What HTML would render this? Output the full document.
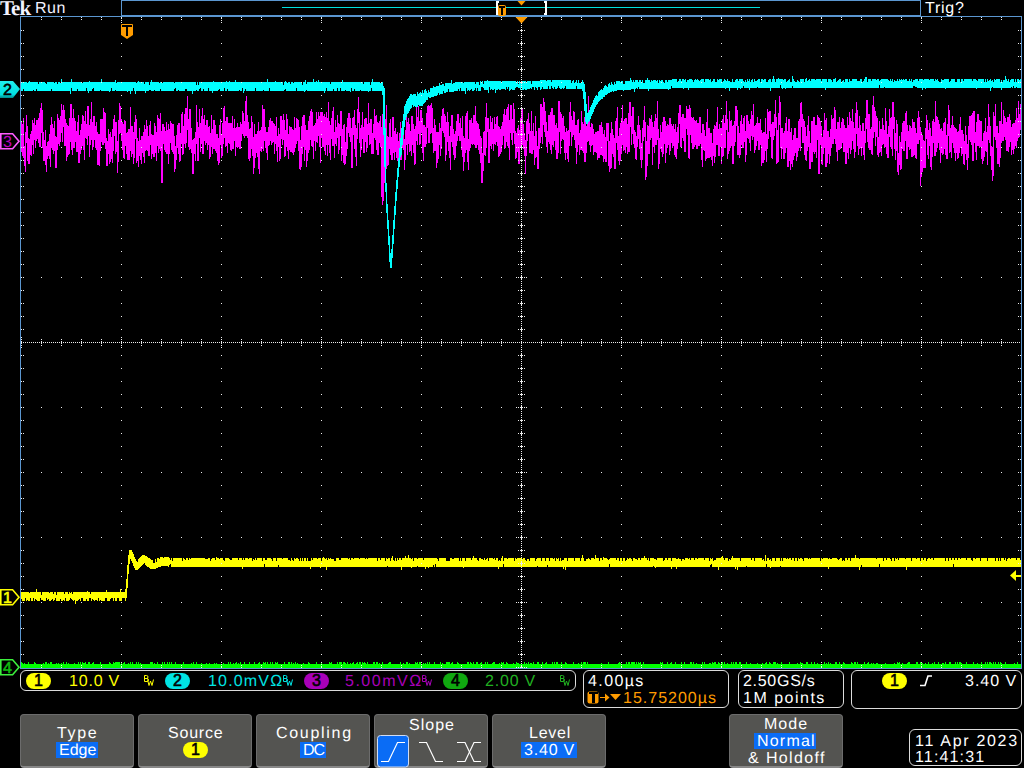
<!DOCTYPE html>
<html><head><meta charset="utf-8">
<style>
html,body{margin:0;padding:0;background:#000;width:1024px;height:768px;overflow:hidden}
body{position:relative;font-family:"Liberation Sans",sans-serif;color:#fff}
.t{position:absolute;white-space:nowrap;font-size:16px;line-height:20px;text-rendering:geometricPrecision}
.box{position:absolute;border:1px solid #dcdcdc;border-radius:6px;box-sizing:border-box}
.btn{position:absolute;top:714px;height:54px;width:114px;background:#545451;border:1px solid #6c6c6c;border-bottom:2px solid #888;border-radius:4px;box-sizing:border-box}
.hl{position:absolute;background:#0a6cf5;height:16px;top:742px}
.pill{position:absolute;height:16px;width:25px;border-radius:8px;font-size:16px;line-height:16px;text-align:center;-webkit-text-stroke:0.6px #000}
</style></head><body>
<svg width="1024" height="768" viewBox="0 0 1024 768" style="position:absolute;left:0;top:0" shape-rendering="crispEdges">
<g fill="#5b96d0">
<rect x="20" y="16" width="1002" height="1"/><rect x="20" y="668" width="1002" height="1"/>
<rect x="20" y="16" width="1" height="653"/><rect x="1021" y="16" width="1" height="653"/>
</g>
<path d="M21 121h1v31h-1zM22 124h1v32h-1zM23 118h1v40h-1zM24 146h1v20h-1zM25 132h1v40h-1zM26 115h1v28h-1zM27 126h1v35h-1zM28 138h1v26h-1zM29 139h1v25h-1zM30 134h1v21h-1zM31 131h1v25h-1zM32 120h1v25h-1zM33 123h1v31h-1zM34 118h1v22h-1zM35 125h1v23h-1zM36 120h1v21h-1zM37 120h1v19h-1zM38 118h1v25h-1zM39 113h1v34h-1zM40 108h1v39h-1zM41 103h1v30h-1zM42 110h1v38h-1zM43 132h1v29h-1zM44 140h1v21h-1zM45 130h1v35h-1zM46 146h1v26h-1zM47 142h1v17h-1zM48 141h1v15h-1zM49 134h1v25h-1zM50 125h1v42h-1zM51 117h1v31h-1zM52 124h1v26h-1zM53 128h1v26h-1zM54 121h1v30h-1zM55 136h1v32h-1zM56 137h1v31h-1zM57 114h1v36h-1zM58 118h1v26h-1zM59 120h1v26h-1zM60 116h1v26h-1zM61 104h1v29h-1zM62 110h1v32h-1zM63 105h1v22h-1zM64 110h1v36h-1zM65 119h1v27h-1zM66 123h1v38h-1zM67 125h1v32h-1zM68 126h1v29h-1zM69 118h1v36h-1zM70 104h1v38h-1zM71 104h1v46h-1zM72 118h1v37h-1zM73 109h1v39h-1zM74 118h1v30h-1zM75 121h1v21h-1zM76 131h1v21h-1zM77 122h1v30h-1zM78 115h1v48h-1zM79 135h1v28h-1zM80 130h1v24h-1zM81 124h1v26h-1zM82 115h1v31h-1zM83 116h1v34h-1zM84 121h1v39h-1zM85 111h1v27h-1zM86 124h1v15h-1zM87 106h1v39h-1zM88 106h1v30h-1zM89 125h1v32h-1zM90 119h1v26h-1zM91 102h1v38h-1zM92 122h1v28h-1zM93 116h1v31h-1zM94 116h1v24h-1zM95 126h1v22h-1zM96 122h1v28h-1zM97 132h1v33h-1zM98 134h1v31h-1zM99 134h1v32h-1zM100 119h1v32h-1zM101 119h1v23h-1zM102 119h1v26h-1zM103 108h1v37h-1zM104 112h1v31h-1zM105 113h1v36h-1zM106 138h1v28h-1zM107 141h1v25h-1zM108 129h1v25h-1zM109 134h1v30h-1zM110 132h1v30h-1zM111 137h1v22h-1zM112 129h1v34h-1zM113 119h1v32h-1zM114 115h1v21h-1zM115 122h1v32h-1zM116 122h1v30h-1zM117 141h1v32h-1zM118 120h1v42h-1zM119 103h1v31h-1zM120 106h1v27h-1zM121 119h1v22h-1zM122 122h1v28h-1zM123 124h1v34h-1zM124 120h1v39h-1zM125 121h1v25h-1zM126 133h1v21h-1zM127 132h1v28h-1zM128 129h1v31h-1zM129 129h1v31h-1zM130 107h1v44h-1zM131 126h1v31h-1zM132 126h1v28h-1zM133 132h1v32h-1zM134 122h1v36h-1zM135 115h1v24h-1zM136 119h1v44h-1zM137 138h1v23h-1zM138 141h1v26h-1zM139 128h1v28h-1zM140 140h1v20h-1zM141 136h1v28h-1zM142 136h1v17h-1zM143 132h1v25h-1zM144 125h1v38h-1zM145 129h1v22h-1zM146 120h1v30h-1zM147 126h1v25h-1zM148 136h1v20h-1zM149 125h1v31h-1zM150 121h1v24h-1zM151 134h1v25h-1zM152 135h1v19h-1zM153 135h1v22h-1zM154 123h1v34h-1zM155 126h1v27h-1zM156 132h1v29h-1zM157 115h1v31h-1zM158 118h1v35h-1zM159 119h1v30h-1zM160 113h1v38h-1zM161 131h1v52h-1zM162 124h1v59h-1zM163 124h1v20h-1zM164 127h1v23h-1zM165 131h1v21h-1zM166 122h1v32h-1zM167 130h1v24h-1zM168 124h1v40h-1zM169 129h1v25h-1zM170 121h1v22h-1zM171 123h1v27h-1zM172 124h1v28h-1zM173 124h1v30h-1zM174 136h1v36h-1zM175 146h1v23h-1zM176 135h1v25h-1zM177 125h1v23h-1zM178 123h1v31h-1zM179 123h1v39h-1zM180 133h1v28h-1zM181 114h1v30h-1zM182 112h1v43h-1zM183 126h1v28h-1zM184 114h1v30h-1zM185 108h1v40h-1zM186 108h1v35h-1zM187 96h1v34h-1zM188 119h1v28h-1zM189 109h1v41h-1zM190 109h1v40h-1zM191 128h1v25h-1zM192 140h1v34h-1zM193 139h1v35h-1zM194 138h1v16h-1zM195 132h1v29h-1zM196 105h1v39h-1zM197 122h1v39h-1zM198 127h1v34h-1zM199 109h1v29h-1zM200 123h1v29h-1zM201 116h1v28h-1zM202 108h1v46h-1zM203 119h1v35h-1zM204 115h1v26h-1zM205 125h1v20h-1zM206 120h1v23h-1zM207 120h1v30h-1zM208 127h1v18h-1zM209 126h1v33h-1zM210 133h1v24h-1zM211 115h1v32h-1zM212 129h1v25h-1zM213 120h1v29h-1zM214 120h1v29h-1zM215 125h1v26h-1zM216 134h1v19h-1zM217 134h1v27h-1zM218 138h1v27h-1zM219 125h1v38h-1zM220 119h1v26h-1zM221 134h1v24h-1zM222 123h1v33h-1zM223 108h1v36h-1zM224 106h1v32h-1zM225 121h1v26h-1zM226 117h1v29h-1zM227 117h1v36h-1zM228 123h1v20h-1zM229 123h1v21h-1zM230 123h1v27h-1zM231 123h1v28h-1zM232 116h1v33h-1zM233 128h1v21h-1zM234 119h1v22h-1zM235 128h1v28h-1zM236 127h1v20h-1zM237 123h1v25h-1zM238 127h1v20h-1zM239 127h1v22h-1zM240 122h1v27h-1zM241 124h1v17h-1zM242 111h1v23h-1zM243 113h1v23h-1zM244 121h1v17h-1zM245 101h1v35h-1zM246 96h1v40h-1zM247 115h1v23h-1zM248 122h1v37h-1zM249 129h1v32h-1zM250 128h1v30h-1zM251 116h1v33h-1zM252 122h1v34h-1zM253 137h1v37h-1zM254 124h1v44h-1zM255 134h1v24h-1zM256 134h1v19h-1zM257 131h1v26h-1zM258 122h1v47h-1zM259 131h1v43h-1zM260 130h1v21h-1zM261 127h1v25h-1zM262 105h1v44h-1zM263 109h1v42h-1zM264 109h1v32h-1zM265 127h1v21h-1zM266 132h1v21h-1zM267 132h1v28h-1zM268 127h1v19h-1zM269 120h1v25h-1zM270 118h1v23h-1zM271 121h1v24h-1zM272 121h1v22h-1zM273 123h1v19h-1zM274 124h1v30h-1zM275 126h1v18h-1zM276 117h1v34h-1zM277 136h1v26h-1zM278 128h1v19h-1zM279 134h1v27h-1zM280 116h1v43h-1zM281 116h1v23h-1zM282 120h1v25h-1zM283 114h1v26h-1zM284 120h1v37h-1zM285 130h1v26h-1zM286 114h1v33h-1zM287 119h1v32h-1zM288 134h1v25h-1zM289 126h1v24h-1zM290 127h1v25h-1zM291 127h1v25h-1zM292 129h1v24h-1zM293 130h1v25h-1zM294 117h1v35h-1zM295 128h1v20h-1zM296 118h1v26h-1zM297 119h1v22h-1zM298 120h1v31h-1zM299 127h1v42h-1zM300 140h1v30h-1zM301 126h1v41h-1zM302 117h1v37h-1zM303 115h1v32h-1zM304 115h1v46h-1zM305 125h1v25h-1zM306 130h1v37h-1zM307 130h1v31h-1zM308 121h1v32h-1zM309 116h1v34h-1zM310 111h1v29h-1zM311 109h1v37h-1zM312 112h1v35h-1zM313 126h1v33h-1zM314 125h1v16h-1zM315 123h1v28h-1zM316 112h1v30h-1zM317 119h1v24h-1zM318 112h1v24h-1zM319 116h1v31h-1zM320 112h1v51h-1zM321 112h1v26h-1zM322 112h1v35h-1zM323 116h1v31h-1zM324 114h1v37h-1zM325 117h1v38h-1zM326 112h1v33h-1zM327 118h1v38h-1zM328 102h1v43h-1zM329 121h1v32h-1zM330 125h1v35h-1zM331 118h1v21h-1zM332 111h1v35h-1zM333 107h1v39h-1zM334 132h1v26h-1zM335 120h1v24h-1zM336 127h1v19h-1zM337 115h1v23h-1zM338 123h1v31h-1zM339 124h1v26h-1zM340 111h1v25h-1zM341 111h1v50h-1zM342 129h1v26h-1zM343 125h1v38h-1zM344 124h1v41h-1zM345 142h1v22h-1zM346 127h1v29h-1zM347 118h1v31h-1zM348 113h1v20h-1zM349 113h1v24h-1zM350 118h1v24h-1zM351 128h1v40h-1zM352 118h1v50h-1zM353 117h1v18h-1zM354 110h1v39h-1zM355 125h1v32h-1zM356 128h1v38h-1zM357 109h1v30h-1zM358 97h1v26h-1zM359 112h1v31h-1zM360 128h1v29h-1zM361 125h1v25h-1zM362 112h1v27h-1zM363 127h1v26h-1zM364 119h1v34h-1zM365 118h1v24h-1zM366 118h1v34h-1zM367 124h1v24h-1zM368 103h1v32h-1zM369 123h1v22h-1zM370 119h1v25h-1zM371 119h1v35h-1zM372 133h1v21h-1zM373 124h1v30h-1zM374 109h1v29h-1zM375 116h1v24h-1zM376 115h1v35h-1zM377 122h1v33h-1zM378 123h1v32h-1zM379 121h1v22h-1zM380 116h1v31h-1zM381 127h1v70h-1zM382 114h1v91h-1zM383 114h1v87h-1zM384 112h1v71h-1zM385 119h1v62h-1zM386 105h1v64h-1zM387 136h1v30h-1zM388 137h1v28h-1zM389 123h1v26h-1zM390 119h1v36h-1zM391 137h1v23h-1zM392 117h1v43h-1zM393 117h1v36h-1zM394 131h1v29h-1zM395 128h1v24h-1zM396 134h1v24h-1zM397 132h1v29h-1zM398 141h1v23h-1zM399 133h1v30h-1zM400 122h1v38h-1zM401 132h1v28h-1zM402 122h1v26h-1zM403 115h1v35h-1zM404 139h1v31h-1zM405 130h1v30h-1zM406 107h1v38h-1zM407 122h1v33h-1zM408 118h1v26h-1zM409 124h1v28h-1zM410 131h1v20h-1zM411 116h1v40h-1zM412 116h1v29h-1zM413 124h1v29h-1zM414 129h1v36h-1zM415 126h1v38h-1zM416 106h1v35h-1zM417 117h1v28h-1zM418 106h1v28h-1zM419 121h1v24h-1zM420 110h1v34h-1zM421 110h1v23h-1zM422 118h1v35h-1zM423 125h1v36h-1zM424 125h1v22h-1zM425 127h1v20h-1zM426 113h1v31h-1zM427 106h1v22h-1zM428 105h1v38h-1zM429 106h1v37h-1zM430 105h1v29h-1zM431 103h1v30h-1zM432 108h1v35h-1zM433 128h1v25h-1zM434 119h1v32h-1zM435 125h1v26h-1zM436 132h1v36h-1zM437 132h1v31h-1zM438 132h1v27h-1zM439 123h1v22h-1zM440 128h1v28h-1zM441 116h1v33h-1zM442 109h1v22h-1zM443 108h1v25h-1zM444 114h1v23h-1zM445 116h1v45h-1zM446 122h1v33h-1zM447 112h1v30h-1zM448 122h1v29h-1zM449 136h1v22h-1zM450 126h1v44h-1zM451 115h1v27h-1zM452 115h1v32h-1zM453 129h1v26h-1zM454 134h1v26h-1zM455 131h1v27h-1zM456 121h1v25h-1zM457 114h1v27h-1zM458 114h1v22h-1zM459 123h1v18h-1zM460 118h1v23h-1zM461 128h1v22h-1zM462 116h1v41h-1zM463 136h1v35h-1zM464 138h1v24h-1zM465 116h1v37h-1zM466 113h1v37h-1zM467 111h1v51h-1zM468 139h1v31h-1zM469 120h1v31h-1zM470 120h1v28h-1zM471 118h1v26h-1zM472 123h1v22h-1zM473 115h1v29h-1zM474 115h1v30h-1zM475 106h1v42h-1zM476 121h1v27h-1zM477 123h1v22h-1zM478 124h1v26h-1zM479 129h1v25h-1zM480 136h1v27h-1zM481 138h1v45h-1zM482 153h1v30h-1zM483 132h1v39h-1zM484 131h1v24h-1zM485 117h1v39h-1zM486 103h1v45h-1zM487 118h1v14h-1zM488 118h1v45h-1zM489 129h1v34h-1zM490 116h1v30h-1zM491 122h1v27h-1zM492 118h1v26h-1zM493 129h1v22h-1zM494 117h1v27h-1zM495 124h1v21h-1zM496 117h1v25h-1zM497 116h1v30h-1zM498 126h1v31h-1zM499 127h1v29h-1zM500 129h1v25h-1zM501 126h1v26h-1zM502 122h1v23h-1zM503 114h1v22h-1zM504 109h1v40h-1zM505 115h1v33h-1zM506 109h1v33h-1zM507 107h1v39h-1zM508 104h1v44h-1zM509 120h1v40h-1zM510 105h1v28h-1zM511 105h1v35h-1zM512 119h1v26h-1zM513 103h1v30h-1zM514 109h1v35h-1zM515 131h1v28h-1zM516 133h1v25h-1zM517 128h1v24h-1zM518 125h1v39h-1zM519 130h1v34h-1zM520 118h1v29h-1zM521 108h1v39h-1zM522 108h1v37h-1zM523 124h1v25h-1zM524 133h1v23h-1zM525 140h1v34h-1zM526 121h1v35h-1zM527 119h1v22h-1zM528 113h1v21h-1zM529 123h1v30h-1zM530 131h1v22h-1zM531 111h1v43h-1zM532 131h1v23h-1zM533 123h1v27h-1zM534 136h1v29h-1zM535 116h1v42h-1zM536 131h1v26h-1zM537 146h1v23h-1zM538 128h1v41h-1zM539 128h1v21h-1zM540 104h1v39h-1zM541 104h1v33h-1zM542 107h1v37h-1zM543 98h1v27h-1zM544 102h1v30h-1zM545 111h1v26h-1zM546 122h1v25h-1zM547 131h1v22h-1zM548 115h1v27h-1zM549 115h1v29h-1zM550 112h1v38h-1zM551 108h1v46h-1zM552 108h1v37h-1zM553 115h1v32h-1zM554 115h1v26h-1zM555 125h1v25h-1zM556 123h1v36h-1zM557 128h1v31h-1zM558 101h1v52h-1zM559 101h1v31h-1zM560 112h1v42h-1zM561 114h1v27h-1zM562 118h1v21h-1zM563 116h1v24h-1zM564 126h1v27h-1zM565 132h1v28h-1zM566 128h1v25h-1zM567 131h1v28h-1zM568 130h1v32h-1zM569 112h1v34h-1zM570 102h1v30h-1zM571 116h1v30h-1zM572 120h1v17h-1zM573 111h1v24h-1zM574 112h1v28h-1zM575 125h1v23h-1zM576 125h1v39h-1zM577 120h1v32h-1zM578 119h1v26h-1zM579 133h1v22h-1zM580 130h1v20h-1zM581 111h1v39h-1zM582 122h1v29h-1zM583 124h1v29h-1zM584 117h1v45h-1zM585 115h1v47h-1zM586 126h1v27h-1zM587 121h1v21h-1zM588 96h1v45h-1zM589 111h1v34h-1zM590 127h1v25h-1zM591 123h1v23h-1zM592 124h1v21h-1zM593 129h1v26h-1zM594 134h1v18h-1zM595 132h1v20h-1zM596 132h1v21h-1zM597 131h1v29h-1zM598 131h1v27h-1zM599 125h1v33h-1zM600 125h1v30h-1zM601 122h1v33h-1zM602 127h1v29h-1zM603 134h1v28h-1zM604 130h1v29h-1zM605 137h1v25h-1zM606 123h1v39h-1zM607 123h1v18h-1zM608 123h1v43h-1zM609 141h1v31h-1zM610 133h1v36h-1zM611 122h1v46h-1zM612 129h1v25h-1zM613 135h1v22h-1zM614 138h1v31h-1zM615 121h1v48h-1zM616 118h1v25h-1zM617 107h1v43h-1zM618 136h1v25h-1zM619 128h1v37h-1zM620 123h1v38h-1zM621 118h1v36h-1zM622 105h1v40h-1zM623 121h1v30h-1zM624 119h1v31h-1zM625 118h1v35h-1zM626 118h1v29h-1zM627 124h1v30h-1zM628 113h1v39h-1zM629 102h1v50h-1zM630 102h1v25h-1zM631 116h1v29h-1zM632 107h1v27h-1zM633 107h1v37h-1zM634 130h1v18h-1zM635 132h1v27h-1zM636 136h1v24h-1zM637 125h1v22h-1zM638 116h1v23h-1zM639 125h1v24h-1zM640 130h1v30h-1zM641 143h1v25h-1zM642 128h1v32h-1zM643 120h1v21h-1zM644 106h1v31h-1zM645 122h1v58h-1zM646 141h1v36h-1zM647 125h1v41h-1zM648 126h1v28h-1zM649 118h1v36h-1zM650 119h1v21h-1zM651 115h1v23h-1zM652 122h1v43h-1zM653 127h1v20h-1zM654 121h1v32h-1zM655 114h1v31h-1zM656 118h1v27h-1zM657 101h1v39h-1zM658 129h1v40h-1zM659 138h1v26h-1zM660 125h1v24h-1zM661 132h1v20h-1zM662 122h1v35h-1zM663 117h1v37h-1zM664 117h1v27h-1zM665 121h1v42h-1zM666 126h1v27h-1zM667 124h1v24h-1zM668 125h1v20h-1zM669 118h1v37h-1zM670 118h1v33h-1zM671 124h1v19h-1zM672 126h1v22h-1zM673 124h1v22h-1zM674 129h1v26h-1zM675 124h1v33h-1zM676 132h1v27h-1zM677 127h1v22h-1zM678 113h1v30h-1zM679 105h1v19h-1zM680 105h1v42h-1zM681 117h1v30h-1zM682 114h1v24h-1zM683 114h1v27h-1zM684 118h1v34h-1zM685 118h1v34h-1zM686 106h1v23h-1zM687 109h1v26h-1zM688 109h1v49h-1zM689 105h1v54h-1zM690 108h1v27h-1zM691 117h1v26h-1zM692 118h1v31h-1zM693 117h1v32h-1zM694 120h1v27h-1zM695 121h1v24h-1zM696 120h1v29h-1zM697 123h1v26h-1zM698 123h1v23h-1zM699 117h1v29h-1zM700 117h1v27h-1zM701 133h1v27h-1zM702 124h1v43h-1zM703 124h1v26h-1zM704 130h1v21h-1zM705 136h1v25h-1zM706 122h1v37h-1zM707 109h1v49h-1zM708 128h1v30h-1zM709 128h1v30h-1zM710 133h1v24h-1zM711 133h1v27h-1zM712 143h1v23h-1zM713 129h1v27h-1zM714 125h1v38h-1zM715 126h1v31h-1zM716 122h1v23h-1zM717 107h1v38h-1zM718 129h1v27h-1zM719 124h1v32h-1zM720 128h1v19h-1zM721 128h1v36h-1zM722 119h1v38h-1zM723 115h1v41h-1zM724 123h1v25h-1zM725 115h1v33h-1zM726 101h1v29h-1zM727 119h1v40h-1zM728 132h1v22h-1zM729 111h1v40h-1zM730 121h1v27h-1zM731 120h1v26h-1zM732 126h1v38h-1zM733 125h1v39h-1zM734 121h1v25h-1zM735 106h1v36h-1zM736 106h1v20h-1zM737 110h1v45h-1zM738 126h1v29h-1zM739 133h1v25h-1zM740 121h1v34h-1zM741 115h1v30h-1zM742 124h1v24h-1zM743 118h1v30h-1zM744 116h1v26h-1zM745 131h1v31h-1zM746 115h1v40h-1zM747 115h1v23h-1zM748 121h1v18h-1zM749 124h1v19h-1zM750 119h1v32h-1zM751 111h1v25h-1zM752 115h1v25h-1zM753 104h1v33h-1zM754 126h1v27h-1zM755 125h1v25h-1zM756 123h1v23h-1zM757 117h1v24h-1zM758 123h1v27h-1zM759 123h1v27h-1zM760 119h1v26h-1zM761 130h1v36h-1zM762 133h1v30h-1zM763 132h1v31h-1zM764 132h1v28h-1zM765 118h1v33h-1zM766 134h1v28h-1zM767 109h1v40h-1zM768 112h1v27h-1zM769 111h1v20h-1zM770 111h1v26h-1zM771 124h1v34h-1zM772 122h1v37h-1zM773 122h1v18h-1zM774 114h1v22h-1zM775 100h1v28h-1zM776 117h1v47h-1zM777 130h1v33h-1zM778 113h1v49h-1zM779 96h1v29h-1zM780 102h1v46h-1zM781 128h1v31h-1zM782 128h1v21h-1zM783 133h1v26h-1zM784 131h1v28h-1zM785 123h1v30h-1zM786 117h1v31h-1zM787 131h1v36h-1zM788 119h1v48h-1zM789 119h1v42h-1zM790 132h1v38h-1zM791 128h1v36h-1zM792 140h1v27h-1zM793 135h1v25h-1zM794 128h1v28h-1zM795 128h1v25h-1zM796 138h1v23h-1zM797 138h1v19h-1zM798 121h1v30h-1zM799 119h1v29h-1zM800 103h1v48h-1zM801 102h1v25h-1zM802 114h1v29h-1zM803 119h1v24h-1zM804 121h1v34h-1zM805 127h1v33h-1zM806 136h1v25h-1zM807 125h1v26h-1zM808 116h1v31h-1zM809 131h1v38h-1zM810 143h1v26h-1zM811 121h1v41h-1zM812 121h1v41h-1zM813 117h1v35h-1zM814 117h1v37h-1zM815 125h1v27h-1zM816 125h1v33h-1zM817 115h1v25h-1zM818 117h1v57h-1zM819 118h1v56h-1zM820 121h1v24h-1zM821 126h1v38h-1zM822 137h1v28h-1zM823 130h1v24h-1zM824 113h1v35h-1zM825 120h1v47h-1zM826 118h1v49h-1zM827 131h1v32h-1zM828 131h1v23h-1zM829 137h1v27h-1zM830 129h1v27h-1zM831 115h1v33h-1zM832 119h1v25h-1zM833 118h1v26h-1zM834 107h1v32h-1zM835 110h1v34h-1zM836 129h1v23h-1zM837 122h1v39h-1zM838 122h1v28h-1zM839 117h1v33h-1zM840 128h1v21h-1zM841 122h1v25h-1zM842 118h1v25h-1zM843 119h1v33h-1zM844 125h1v27h-1zM845 128h1v36h-1zM846 128h1v36h-1zM847 117h1v36h-1zM848 125h1v34h-1zM849 112h1v36h-1zM850 118h1v36h-1zM851 121h1v29h-1zM852 109h1v32h-1zM853 122h1v27h-1zM854 128h1v30h-1zM855 113h1v39h-1zM856 102h1v32h-1zM857 110h1v36h-1zM858 128h1v27h-1zM859 116h1v33h-1zM860 125h1v23h-1zM861 131h1v25h-1zM862 123h1v25h-1zM863 123h1v32h-1zM864 131h1v29h-1zM865 118h1v25h-1zM866 100h1v29h-1zM867 100h1v42h-1zM868 114h1v34h-1zM869 114h1v36h-1zM870 129h1v21h-1zM871 127h1v27h-1zM872 105h1v50h-1zM873 96h1v42h-1zM874 107h1v25h-1zM875 111h1v35h-1zM876 116h1v21h-1zM877 118h1v37h-1zM878 137h1v20h-1zM879 121h1v32h-1zM880 129h1v23h-1zM881 129h1v27h-1zM882 118h1v27h-1zM883 125h1v19h-1zM884 130h1v18h-1zM885 108h1v39h-1zM886 121h1v33h-1zM887 134h1v24h-1zM888 126h1v32h-1zM889 109h1v28h-1zM890 118h1v29h-1zM891 117h1v32h-1zM892 102h1v54h-1zM893 102h1v27h-1zM894 117h1v32h-1zM895 133h1v27h-1zM896 120h1v31h-1zM897 124h1v48h-1zM898 153h1v22h-1zM899 136h1v29h-1zM900 142h1v28h-1zM901 132h1v37h-1zM902 123h1v26h-1zM903 121h1v30h-1zM904 121h1v30h-1zM905 113h1v28h-1zM906 111h1v48h-1zM907 125h1v34h-1zM908 131h1v16h-1zM909 125h1v25h-1zM910 126h1v23h-1zM911 128h1v29h-1zM912 119h1v38h-1zM913 122h1v34h-1zM914 122h1v33h-1zM915 128h1v30h-1zM916 133h1v26h-1zM917 118h1v26h-1zM918 111h1v33h-1zM919 117h1v23h-1zM920 127h1v59h-1zM921 132h1v45h-1zM922 135h1v37h-1zM923 140h1v28h-1zM924 141h1v27h-1zM925 128h1v40h-1zM926 115h1v24h-1zM927 120h1v35h-1zM928 130h1v29h-1zM929 123h1v23h-1zM930 128h1v39h-1zM931 136h1v34h-1zM932 121h1v36h-1zM933 119h1v24h-1zM934 122h1v34h-1zM935 101h1v55h-1zM936 116h1v36h-1zM937 117h1v31h-1zM938 120h1v23h-1zM939 124h1v26h-1zM940 129h1v34h-1zM941 128h1v25h-1zM942 131h1v24h-1zM943 123h1v31h-1zM944 122h1v27h-1zM945 118h1v37h-1zM946 135h1v24h-1zM947 124h1v35h-1zM948 105h1v31h-1zM949 110h1v43h-1zM950 128h1v24h-1zM951 125h1v33h-1zM952 116h1v27h-1zM953 125h1v23h-1zM954 127h1v26h-1zM955 128h1v33h-1zM956 129h1v24h-1zM957 132h1v27h-1zM958 131h1v27h-1zM959 124h1v29h-1zM960 117h1v31h-1zM961 130h1v26h-1zM962 130h1v24h-1zM963 134h1v30h-1zM964 141h1v24h-1zM965 126h1v28h-1zM966 135h1v25h-1zM967 144h1v26h-1zM968 126h1v32h-1zM969 116h1v24h-1zM970 116h1v26h-1zM971 115h1v30h-1zM972 113h1v48h-1zM973 111h1v50h-1zM974 111h1v32h-1zM975 132h1v20h-1zM976 122h1v38h-1zM977 114h1v32h-1zM978 114h1v32h-1zM979 120h1v28h-1zM980 121h1v26h-1zM981 121h1v38h-1zM982 141h1v23h-1zM983 133h1v28h-1zM984 131h1v26h-1zM985 118h1v33h-1zM986 132h1v20h-1zM987 126h1v39h-1zM988 104h1v36h-1zM989 117h1v26h-1zM990 126h1v30h-1zM991 146h1v24h-1zM992 147h1v34h-1zM993 112h1v64h-1zM994 116h1v21h-1zM995 104h1v36h-1zM996 126h1v22h-1zM997 126h1v38h-1zM998 133h1v31h-1zM999 121h1v46h-1zM1000 121h1v37h-1zM1001 102h1v41h-1zM1002 124h1v17h-1zM1003 110h1v31h-1zM1004 116h1v21h-1zM1005 118h1v22h-1zM1006 122h1v29h-1zM1007 117h1v34h-1zM1008 117h1v35h-1zM1009 114h1v33h-1zM1010 120h1v22h-1zM1011 127h1v28h-1zM1012 124h1v26h-1zM1013 123h1v31h-1zM1014 123h1v26h-1zM1015 120h1v26h-1zM1016 108h1v40h-1zM1017 118h1v23h-1zM1018 101h1v37h-1zM1019 114h1v23h-1zM1020 104h1v26h-1z" fill="#ff00ff"/>
<path d="M21 82h1v9h-1zM22 82h1v9h-1zM23 82h1v7h-1zM24 82h1v9h-1zM25 82h1v9h-1zM26 82h1v9h-1zM27 83h1v8h-1zM28 82h1v9h-1zM29 81h1v10h-1zM30 82h1v9h-1zM31 82h1v9h-1zM32 82h1v9h-1zM33 82h1v8h-1zM34 82h1v9h-1zM35 82h1v9h-1zM36 82h1v7h-1zM37 82h1v9h-1zM38 84h1v7h-1zM39 82h1v9h-1zM40 82h1v9h-1zM41 82h1v9h-1zM42 82h1v9h-1zM43 82h1v9h-1zM44 82h1v9h-1zM45 83h1v8h-1zM46 84h1v7h-1zM47 82h1v9h-1zM48 82h1v9h-1zM49 82h1v9h-1zM50 82h1v9h-1zM51 82h1v7h-1zM52 82h1v9h-1zM53 82h1v9h-1zM54 83h1v8h-1zM55 82h1v9h-1zM56 82h1v9h-1zM57 84h1v7h-1zM58 82h1v9h-1zM59 82h1v9h-1zM60 83h1v8h-1zM61 79h1v12h-1zM62 82h1v9h-1zM63 82h1v9h-1zM64 82h1v9h-1zM65 82h1v9h-1zM66 82h1v9h-1zM67 82h1v9h-1zM68 82h1v9h-1zM69 82h1v9h-1zM70 82h1v12h-1zM71 79h1v9h-1zM72 82h1v9h-1zM73 82h1v9h-1zM74 82h1v9h-1zM75 82h1v9h-1zM76 82h1v9h-1zM77 82h1v7h-1zM78 82h1v9h-1zM79 82h1v9h-1zM80 82h1v9h-1zM81 82h1v9h-1zM82 83h1v8h-1zM83 82h1v9h-1zM84 82h1v9h-1zM85 82h1v9h-1zM86 82h1v6h-1zM87 82h1v9h-1zM88 82h1v11h-1zM89 81h1v10h-1zM90 82h1v9h-1zM91 82h1v9h-1zM92 82h1v7h-1zM93 82h1v6h-1zM94 82h1v9h-1zM95 82h1v9h-1zM96 82h1v9h-1zM97 82h1v9h-1zM98 82h1v9h-1zM99 82h1v9h-1zM100 82h1v8h-1zM101 79h1v12h-1zM102 82h1v9h-1zM103 82h1v9h-1zM104 82h1v9h-1zM105 82h1v9h-1zM106 82h1v9h-1zM107 82h1v9h-1zM108 82h1v9h-1zM109 82h1v10h-1zM110 82h1v9h-1zM111 82h1v6h-1zM112 82h1v9h-1zM113 82h1v9h-1zM114 82h1v9h-1zM115 80h1v10h-1zM116 83h1v8h-1zM117 82h1v9h-1zM118 82h1v9h-1zM119 82h1v9h-1zM120 82h1v9h-1zM121 82h1v9h-1zM122 82h1v9h-1zM123 82h1v9h-1zM124 82h1v9h-1zM125 82h1v9h-1zM126 82h1v9h-1zM127 82h1v10h-1zM128 82h1v9h-1zM129 82h1v9h-1zM130 82h1v12h-1zM131 82h1v9h-1zM132 82h1v9h-1zM133 82h1v6h-1zM134 82h1v9h-1zM135 82h1v12h-1zM136 83h1v8h-1zM137 82h1v9h-1zM138 81h1v10h-1zM139 82h1v9h-1zM140 82h1v9h-1zM141 82h1v9h-1zM142 82h1v9h-1zM143 82h1v9h-1zM144 84h1v7h-1zM145 82h1v11h-1zM146 82h1v9h-1zM147 82h1v9h-1zM148 82h1v9h-1zM149 85h1v5h-1zM150 82h1v8h-1zM151 80h1v11h-1zM152 82h1v9h-1zM153 82h1v9h-1zM154 82h1v8h-1zM155 82h1v9h-1zM156 82h1v9h-1zM157 82h1v9h-1zM158 82h1v9h-1zM159 83h1v8h-1zM160 82h1v7h-1zM161 82h1v9h-1zM162 83h1v8h-1zM163 82h1v9h-1zM164 82h1v9h-1zM165 82h1v9h-1zM166 82h1v9h-1zM167 82h1v9h-1zM168 82h1v9h-1zM169 82h1v9h-1zM170 82h1v9h-1zM171 82h1v9h-1zM172 82h1v9h-1zM173 82h1v9h-1zM174 83h1v6h-1zM175 82h1v6h-1zM176 82h1v9h-1zM177 82h1v9h-1zM178 82h1v8h-1zM179 82h1v9h-1zM180 82h1v9h-1zM181 82h1v9h-1zM182 82h1v9h-1zM183 82h1v9h-1zM184 82h1v9h-1zM185 82h1v7h-1zM186 82h1v7h-1zM187 82h1v9h-1zM188 82h1v9h-1zM189 82h1v9h-1zM190 82h1v9h-1zM191 82h1v9h-1zM192 82h1v12h-1zM193 82h1v9h-1zM194 82h1v9h-1zM195 82h1v9h-1zM196 85h1v5h-1zM197 82h1v9h-1zM198 85h1v6h-1zM199 82h1v7h-1zM200 82h1v6h-1zM201 82h1v9h-1zM202 82h1v9h-1zM203 82h1v7h-1zM204 82h1v9h-1zM205 82h1v9h-1zM206 82h1v9h-1zM207 82h1v9h-1zM208 82h1v6h-1zM209 82h1v9h-1zM210 82h1v9h-1zM211 82h1v9h-1zM212 82h1v11h-1zM213 81h1v10h-1zM214 82h1v9h-1zM215 82h1v9h-1zM216 82h1v9h-1zM217 82h1v9h-1zM218 82h1v8h-1zM219 82h1v7h-1zM220 82h1v9h-1zM221 83h1v8h-1zM222 82h1v9h-1zM223 82h1v9h-1zM224 82h1v6h-1zM225 82h1v9h-1zM226 81h1v10h-1zM227 82h1v7h-1zM228 82h1v9h-1zM229 81h1v10h-1zM230 82h1v9h-1zM231 82h1v9h-1zM232 82h1v9h-1zM233 82h1v9h-1zM234 82h1v9h-1zM235 80h1v11h-1zM236 82h1v9h-1zM237 82h1v9h-1zM238 82h1v9h-1zM239 82h1v8h-1zM240 82h1v9h-1zM241 82h1v9h-1zM242 82h1v6h-1zM243 82h1v11h-1zM244 82h1v9h-1zM245 82h1v7h-1zM246 82h1v9h-1zM247 82h1v9h-1zM248 82h1v9h-1zM249 82h1v9h-1zM250 82h1v9h-1zM251 82h1v9h-1zM252 82h1v9h-1zM253 82h1v9h-1zM254 82h1v9h-1zM255 82h1v6h-1zM256 82h1v9h-1zM257 82h1v9h-1zM258 82h1v9h-1zM259 82h1v9h-1zM260 82h1v9h-1zM261 82h1v9h-1zM262 82h1v9h-1zM263 82h1v8h-1zM264 82h1v9h-1zM265 82h1v9h-1zM266 82h1v9h-1zM267 79h1v12h-1zM268 82h1v9h-1zM269 82h1v6h-1zM270 82h1v9h-1zM271 82h1v9h-1zM272 82h1v9h-1zM273 82h1v9h-1zM274 82h1v9h-1zM275 81h1v10h-1zM276 82h1v9h-1zM277 82h1v9h-1zM278 82h1v9h-1zM279 82h1v9h-1zM280 82h1v9h-1zM281 82h1v9h-1zM282 82h1v9h-1zM283 85h1v6h-1zM284 82h1v8h-1zM285 81h1v8h-1zM286 82h1v9h-1zM287 83h1v8h-1zM288 82h1v9h-1zM289 82h1v9h-1zM290 84h1v7h-1zM291 82h1v9h-1zM292 82h1v9h-1zM293 83h1v8h-1zM294 82h1v9h-1zM295 82h1v9h-1zM296 82h1v6h-1zM297 82h1v9h-1zM298 82h1v9h-1zM299 82h1v9h-1zM300 82h1v9h-1zM301 82h1v9h-1zM302 85h1v6h-1zM303 82h1v9h-1zM304 82h1v10h-1zM305 80h1v11h-1zM306 84h1v6h-1zM307 82h1v9h-1zM308 82h1v9h-1zM309 82h1v9h-1zM310 82h1v9h-1zM311 82h1v9h-1zM312 82h1v9h-1zM313 79h1v12h-1zM314 82h1v9h-1zM315 82h1v9h-1zM316 81h1v10h-1zM317 82h1v9h-1zM318 80h1v11h-1zM319 82h1v9h-1zM320 82h1v9h-1zM321 82h1v9h-1zM322 82h1v9h-1zM323 82h1v9h-1zM324 82h1v11h-1zM325 82h1v9h-1zM326 82h1v6h-1zM327 82h1v9h-1zM328 82h1v9h-1zM329 82h1v9h-1zM330 84h1v7h-1zM331 82h1v9h-1zM332 82h1v9h-1zM333 82h1v7h-1zM334 82h1v9h-1zM335 82h1v9h-1zM336 82h1v9h-1zM337 82h1v6h-1zM338 82h1v9h-1zM339 82h1v9h-1zM340 82h1v6h-1zM341 82h1v9h-1zM342 80h1v11h-1zM343 82h1v9h-1zM344 82h1v9h-1zM345 82h1v8h-1zM346 82h1v9h-1zM347 82h1v9h-1zM348 82h1v9h-1zM349 82h1v9h-1zM350 82h1v10h-1zM351 82h1v6h-1zM352 82h1v9h-1zM353 82h1v9h-1zM354 82h1v7h-1zM355 82h1v9h-1zM356 82h1v9h-1zM357 82h1v9h-1zM358 82h1v9h-1zM359 82h1v9h-1zM360 82h1v8h-1zM361 82h1v9h-1zM362 82h1v9h-1zM363 84h1v7h-1zM364 82h1v9h-1zM365 82h1v9h-1zM366 82h1v9h-1zM367 82h1v9h-1zM368 82h1v10h-1zM369 82h1v9h-1zM370 85h1v6h-1zM371 82h1v6h-1zM372 79h1v12h-1zM373 82h1v9h-1zM374 82h1v9h-1zM375 82h1v9h-1zM376 82h1v9h-1zM377 82h1v9h-1zM378 82h1v9h-1zM379 82h1v9h-1zM380 83h1v8h-1zM381 82h1v9h-1zM382 82h1v13h-1zM383 86h1v49h-1zM384 88h1v45h-1zM384 126h1v41h-1zM385 128h1v37h-1zM385 158h1v34h-1zM386 183h1v30h-1zM387 204h1v25h-1zM388 220h1v25h-1zM389 236h1v26h-1zM390 253h1v15h-1zM391 249h1v19h-1zM392 235h1v23h-1zM393 220h1v24h-1zM394 206h1v23h-1zM395 192h1v23h-1zM396 180h1v21h-1zM397 168h1v21h-1zM398 158h1v19h-1zM399 148h1v19h-1zM400 138h1v19h-1zM401 140h1v15h-1zM401 128h1v19h-1zM402 130h1v15h-1zM402 121h1v16h-1zM403 123h1v12h-1zM403 114h1v18h-1zM404 106h1v21h-1zM405 104h1v16h-1zM406 101h1v16h-1zM407 99h1v15h-1zM408 98h1v15h-1zM409 96h1v15h-1zM410 94h1v15h-1zM411 94h1v14h-1zM412 95h1v10h-1zM413 94h1v13h-1zM414 94h1v12h-1zM415 94h1v13h-1zM416 96h1v11h-1zM417 92h1v15h-1zM418 94h1v11h-1zM419 93h1v13h-1zM420 92h1v14h-1zM421 93h1v13h-1zM422 90h1v16h-1zM423 93h1v11h-1zM424 90h1v13h-1zM425 89h1v13h-1zM426 91h1v9h-1zM427 93h1v7h-1zM428 90h1v7h-1zM429 92h1v6h-1zM430 88h1v10h-1zM431 88h1v9h-1zM432 88h1v9h-1zM433 86h1v11h-1zM434 87h1v9h-1zM435 87h1v9h-1zM436 86h1v10h-1zM437 86h1v9h-1zM438 86h1v7h-1zM439 83h1v12h-1zM440 85h1v9h-1zM441 85h1v9h-1zM442 84h1v10h-1zM443 84h1v7h-1zM444 86h1v7h-1zM445 83h1v10h-1zM446 83h1v9h-1zM447 83h1v9h-1zM448 83h1v6h-1zM449 83h1v9h-1zM450 83h1v9h-1zM451 80h1v12h-1zM452 84h1v8h-1zM453 83h1v9h-1zM454 83h1v8h-1zM455 82h1v9h-1zM456 82h1v9h-1zM457 82h1v9h-1zM458 82h1v7h-1zM459 82h1v9h-1zM460 82h1v6h-1zM461 82h1v9h-1zM462 82h1v9h-1zM463 83h1v8h-1zM464 82h1v9h-1zM465 82h1v12h-1zM466 82h1v6h-1zM467 82h1v9h-1zM468 82h1v8h-1zM469 82h1v9h-1zM470 82h1v8h-1zM471 82h1v7h-1zM472 82h1v9h-1zM473 82h1v9h-1zM474 82h1v8h-1zM475 84h1v4h-1zM476 82h1v9h-1zM477 82h1v6h-1zM478 82h1v9h-1zM479 85h1v6h-1zM480 81h1v10h-1zM481 83h1v4h-1zM482 81h1v6h-1zM483 84h1v4h-1zM484 81h1v9h-1zM485 81h1v9h-1zM486 81h1v9h-1zM487 80h1v10h-1zM488 81h1v12h-1zM489 81h1v6h-1zM490 81h1v9h-1zM491 81h1v8h-1zM492 81h1v9h-1zM493 81h1v9h-1zM494 81h1v8h-1zM495 81h1v12h-1zM496 81h1v9h-1zM497 81h1v9h-1zM498 81h1v8h-1zM499 81h1v9h-1zM500 81h1v9h-1zM501 82h1v7h-1zM502 81h1v8h-1zM503 81h1v8h-1zM504 81h1v8h-1zM505 81h1v9h-1zM506 81h1v6h-1zM507 81h1v8h-1zM508 81h1v6h-1zM509 81h1v10h-1zM510 81h1v9h-1zM511 81h1v8h-1zM512 81h1v9h-1zM513 81h1v9h-1zM514 81h1v9h-1zM515 81h1v7h-1zM516 83h1v4h-1zM517 81h1v6h-1zM518 84h1v4h-1zM519 81h1v7h-1zM520 83h1v7h-1zM521 81h1v7h-1zM522 81h1v9h-1zM523 81h1v9h-1zM524 81h1v8h-1zM525 81h1v9h-1zM526 83h1v7h-1zM527 81h1v8h-1zM528 81h1v8h-1zM529 81h1v8h-1zM530 81h1v7h-1zM531 84h1v5h-1zM532 81h1v6h-1zM533 81h1v6h-1zM534 81h1v9h-1zM535 81h1v6h-1zM536 81h1v7h-1zM537 81h1v9h-1zM538 81h1v6h-1zM539 81h1v6h-1zM540 80h1v10h-1zM541 80h1v9h-1zM542 80h1v7h-1zM543 80h1v9h-1zM544 80h1v9h-1zM545 80h1v9h-1zM546 81h1v8h-1zM547 80h1v9h-1zM548 80h1v6h-1zM549 80h1v9h-1zM550 80h1v9h-1zM551 82h1v4h-1zM552 80h1v8h-1zM553 80h1v9h-1zM554 80h1v7h-1zM555 80h1v9h-1zM556 80h1v9h-1zM557 80h1v8h-1zM558 80h1v6h-1zM559 80h1v8h-1zM560 80h1v9h-1zM561 80h1v9h-1zM562 80h1v8h-1zM563 80h1v9h-1zM564 80h1v8h-1zM565 80h1v6h-1zM566 80h1v9h-1zM567 80h1v9h-1zM568 80h1v9h-1zM569 80h1v9h-1zM570 80h1v9h-1zM571 83h1v6h-1zM572 81h1v8h-1zM573 80h1v9h-1zM574 83h1v6h-1zM575 82h1v7h-1zM576 80h1v6h-1zM577 83h1v6h-1zM578 80h1v9h-1zM579 83h1v6h-1zM580 83h1v6h-1zM581 83h1v6h-1zM582 80h1v11h-1zM583 82h1v17h-1zM584 84h1v13h-1zM584 90h1v21h-1zM585 92h1v17h-1zM585 102h1v20h-1zM586 104h1v16h-1zM586 113h1v11h-1zM587 113h1v11h-1zM588 112h1v10h-1zM589 110h1v11h-1zM590 107h1v12h-1zM591 105h1v11h-1zM592 103h1v11h-1zM593 100h1v12h-1zM594 98h1v11h-1zM595 96h1v11h-1zM596 95h1v10h-1zM597 96h1v8h-1zM598 92h1v10h-1zM599 91h1v10h-1zM600 90h1v10h-1zM601 89h1v10h-1zM602 90h1v9h-1zM603 88h1v9h-1zM604 86h1v11h-1zM605 85h1v10h-1zM606 86h1v9h-1zM607 87h1v7h-1zM608 84h1v9h-1zM609 83h1v10h-1zM610 85h1v7h-1zM611 82h1v10h-1zM612 84h1v7h-1zM613 85h1v7h-1zM614 82h1v9h-1zM615 84h1v7h-1zM616 81h1v10h-1zM617 81h1v9h-1zM618 81h1v9h-1zM619 81h1v9h-1zM620 82h1v8h-1zM621 81h1v9h-1zM622 81h1v9h-1zM623 84h1v7h-1zM624 84h1v6h-1zM625 81h1v9h-1zM626 81h1v9h-1zM627 81h1v9h-1zM628 81h1v9h-1zM629 81h1v9h-1zM630 78h1v12h-1zM631 80h1v9h-1zM632 82h1v7h-1zM633 80h1v9h-1zM634 82h1v10h-1zM635 80h1v9h-1zM636 80h1v8h-1zM637 80h1v9h-1zM638 82h1v5h-1zM639 80h1v9h-1zM640 80h1v9h-1zM641 83h1v6h-1zM642 80h1v9h-1zM643 83h1v6h-1zM644 83h1v6h-1zM645 80h1v9h-1zM646 80h1v9h-1zM647 78h1v11h-1zM648 80h1v11h-1zM649 80h1v9h-1zM650 82h1v7h-1zM651 80h1v9h-1zM652 81h1v8h-1zM653 80h1v9h-1zM654 80h1v9h-1zM655 80h1v9h-1zM656 81h1v8h-1zM657 80h1v9h-1zM658 83h1v6h-1zM659 80h1v9h-1zM660 81h1v8h-1zM661 80h1v9h-1zM662 80h1v9h-1zM663 82h1v7h-1zM664 83h1v6h-1zM665 80h1v9h-1zM666 80h1v9h-1zM667 82h1v7h-1zM668 80h1v10h-1zM669 80h1v9h-1zM670 80h1v9h-1zM671 80h1v6h-1zM672 79h1v9h-1zM673 79h1v9h-1zM674 79h1v9h-1zM675 79h1v9h-1zM676 79h1v9h-1zM677 82h1v6h-1zM678 81h1v7h-1zM679 79h1v9h-1zM680 79h1v9h-1zM681 81h1v7h-1zM682 79h1v9h-1zM683 79h1v10h-1zM684 80h1v8h-1zM685 79h1v9h-1zM686 82h1v6h-1zM687 80h1v8h-1zM688 80h1v10h-1zM689 79h1v9h-1zM690 79h1v9h-1zM691 79h1v9h-1zM692 80h1v8h-1zM693 82h1v6h-1zM694 80h1v8h-1zM695 79h1v9h-1zM696 80h1v8h-1zM697 79h1v9h-1zM698 80h1v8h-1zM699 81h1v7h-1zM700 80h1v8h-1zM701 79h1v9h-1zM702 79h1v9h-1zM703 79h1v9h-1zM704 82h1v6h-1zM705 79h1v9h-1zM706 79h1v9h-1zM707 79h1v9h-1zM708 79h1v9h-1zM709 80h1v8h-1zM710 79h1v9h-1zM711 82h1v6h-1zM712 81h1v7h-1zM713 79h1v9h-1zM714 79h1v9h-1zM715 82h1v6h-1zM716 82h1v6h-1zM717 79h1v9h-1zM718 80h1v8h-1zM719 79h1v9h-1zM720 79h1v9h-1zM721 79h1v9h-1zM722 82h1v6h-1zM723 81h1v7h-1zM724 79h1v9h-1zM725 80h1v9h-1zM726 81h1v7h-1zM727 79h1v9h-1zM728 81h1v7h-1zM729 81h1v10h-1zM730 82h1v6h-1zM731 82h1v6h-1zM732 79h1v9h-1zM733 82h1v6h-1zM734 82h1v6h-1zM735 80h1v8h-1zM736 79h1v9h-1zM737 79h1v11h-1zM738 81h1v7h-1zM739 79h1v9h-1zM740 79h1v10h-1zM741 79h1v9h-1zM742 79h1v9h-1zM743 81h1v5h-1zM744 82h1v6h-1zM745 80h1v8h-1zM746 82h1v6h-1zM747 79h1v9h-1zM748 81h1v7h-1zM749 79h1v11h-1zM750 82h1v6h-1zM751 80h1v8h-1zM752 79h1v9h-1zM753 82h1v6h-1zM754 79h1v9h-1zM755 81h1v7h-1zM756 81h1v7h-1zM757 80h1v7h-1zM758 79h1v9h-1zM759 79h1v9h-1zM760 82h1v6h-1zM761 79h1v9h-1zM762 79h1v9h-1zM763 80h1v8h-1zM764 79h1v9h-1zM765 79h1v9h-1zM766 82h1v6h-1zM767 82h1v6h-1zM768 80h1v8h-1zM769 79h1v9h-1zM770 79h1v12h-1zM771 82h1v6h-1zM772 79h1v9h-1zM773 76h1v12h-1zM774 79h1v9h-1zM775 82h1v6h-1zM776 79h1v9h-1zM777 79h1v9h-1zM778 78h1v10h-1zM779 79h1v9h-1zM780 79h1v6h-1zM781 79h1v9h-1zM782 79h1v10h-1zM783 80h1v8h-1zM784 79h1v9h-1zM785 79h1v10h-1zM786 82h1v6h-1zM787 81h1v7h-1zM788 80h1v8h-1zM789 79h1v9h-1zM790 82h1v6h-1zM791 82h1v6h-1zM792 76h1v10h-1zM793 79h1v9h-1zM794 81h1v7h-1zM795 82h1v6h-1zM796 82h1v6h-1zM797 80h1v8h-1zM798 81h1v7h-1zM799 82h1v6h-1zM800 79h1v9h-1zM801 79h1v9h-1zM802 79h1v9h-1zM803 79h1v9h-1zM804 82h1v6h-1zM805 79h1v9h-1zM806 78h1v10h-1zM807 81h1v7h-1zM808 80h1v8h-1zM809 79h1v9h-1zM810 81h1v7h-1zM811 79h1v9h-1zM812 79h1v9h-1zM813 79h1v9h-1zM814 79h1v9h-1zM815 80h1v8h-1zM816 79h1v9h-1zM817 79h1v9h-1zM818 79h1v9h-1zM819 79h1v9h-1zM820 79h1v9h-1zM821 81h1v7h-1zM822 79h1v9h-1zM823 79h1v9h-1zM824 79h1v9h-1zM825 79h1v11h-1zM826 79h1v9h-1zM827 82h1v6h-1zM828 79h1v9h-1zM829 79h1v9h-1zM830 79h1v9h-1zM831 80h1v8h-1zM832 82h1v6h-1zM833 79h1v9h-1zM834 79h1v9h-1zM835 78h1v10h-1zM836 82h1v6h-1zM837 81h1v7h-1zM838 80h1v8h-1zM839 79h1v9h-1zM840 79h1v9h-1zM841 82h1v6h-1zM842 81h1v7h-1zM843 80h1v8h-1zM844 82h1v6h-1zM845 79h1v9h-1zM846 79h1v9h-1zM847 79h1v9h-1zM848 82h1v6h-1zM849 79h1v9h-1zM850 81h1v7h-1zM851 81h1v7h-1zM852 79h1v9h-1zM853 79h1v9h-1zM854 79h1v9h-1zM855 79h1v9h-1zM856 79h1v9h-1zM857 81h1v7h-1zM858 81h1v7h-1zM859 81h1v7h-1zM860 79h1v9h-1zM861 79h1v9h-1zM862 82h1v6h-1zM863 81h1v7h-1zM864 79h1v9h-1zM865 77h1v11h-1zM866 77h1v11h-1zM867 82h1v6h-1zM868 79h1v9h-1zM869 79h1v9h-1zM870 79h1v9h-1zM871 81h1v7h-1zM872 79h1v9h-1zM873 79h1v9h-1zM874 79h1v9h-1zM875 79h1v9h-1zM876 80h1v8h-1zM877 79h1v9h-1zM878 79h1v9h-1zM879 81h1v4h-1zM880 80h1v8h-1zM881 79h1v9h-1zM882 79h1v9h-1zM883 79h1v9h-1zM884 79h1v8h-1zM885 79h1v9h-1zM886 79h1v9h-1zM887 79h1v9h-1zM888 80h1v8h-1zM889 81h1v7h-1zM890 79h1v9h-1zM891 81h1v7h-1zM892 79h1v9h-1zM893 82h1v6h-1zM894 80h1v8h-1zM895 81h1v7h-1zM896 81h1v7h-1zM897 79h1v9h-1zM898 81h1v7h-1zM899 79h1v9h-1zM900 80h1v8h-1zM901 79h1v9h-1zM902 80h1v8h-1zM903 79h1v9h-1zM904 80h1v8h-1zM905 79h1v9h-1zM906 79h1v9h-1zM907 81h1v7h-1zM908 81h1v7h-1zM909 79h1v9h-1zM910 81h1v7h-1zM911 79h1v9h-1zM912 82h1v6h-1zM913 80h1v6h-1zM914 80h1v6h-1zM915 79h1v8h-1zM916 79h1v8h-1zM917 79h1v9h-1zM918 81h1v7h-1zM919 79h1v9h-1zM920 79h1v9h-1zM921 79h1v9h-1zM922 79h1v11h-1zM923 80h1v8h-1zM924 79h1v9h-1zM925 79h1v10h-1zM926 79h1v9h-1zM927 79h1v9h-1zM928 79h1v9h-1zM929 80h1v8h-1zM930 79h1v9h-1zM931 79h1v9h-1zM932 79h1v9h-1zM933 79h1v9h-1zM934 81h1v7h-1zM935 79h1v9h-1zM936 80h1v8h-1zM937 79h1v9h-1zM938 81h1v7h-1zM939 82h1v6h-1zM940 82h1v6h-1zM941 79h1v9h-1zM942 80h1v8h-1zM943 80h1v8h-1zM944 79h1v9h-1zM945 79h1v10h-1zM946 79h1v9h-1zM947 79h1v9h-1zM948 79h1v9h-1zM949 82h1v6h-1zM950 81h1v7h-1zM951 79h1v9h-1zM952 79h1v9h-1zM953 79h1v9h-1zM954 79h1v9h-1zM955 82h1v6h-1zM956 82h1v6h-1zM957 79h1v9h-1zM958 79h1v9h-1zM959 79h1v9h-1zM960 82h1v6h-1zM961 79h1v9h-1zM962 79h1v9h-1zM963 81h1v7h-1zM964 79h1v9h-1zM965 79h1v9h-1zM966 79h1v9h-1zM967 79h1v9h-1zM968 79h1v9h-1zM969 79h1v9h-1zM970 79h1v9h-1zM971 79h1v9h-1zM972 81h1v7h-1zM973 79h1v9h-1zM974 79h1v9h-1zM975 79h1v9h-1zM976 80h1v9h-1zM977 81h1v7h-1zM978 79h1v9h-1zM979 79h1v9h-1zM980 79h1v9h-1zM981 79h1v9h-1zM982 79h1v9h-1zM983 79h1v9h-1zM984 82h1v6h-1zM985 79h1v9h-1zM986 82h1v6h-1zM987 79h1v9h-1zM988 81h1v7h-1zM989 80h1v8h-1zM990 79h1v12h-1zM991 81h1v7h-1zM992 80h1v7h-1zM993 82h1v6h-1zM994 79h1v9h-1zM995 80h1v8h-1zM996 79h1v9h-1zM997 79h1v9h-1zM998 79h1v9h-1zM999 79h1v9h-1zM1000 82h1v6h-1zM1001 80h1v10h-1zM1002 82h1v6h-1zM1003 80h1v8h-1zM1004 80h1v8h-1zM1005 76h1v12h-1zM1006 79h1v9h-1zM1007 81h1v7h-1zM1008 79h1v9h-1zM1009 82h1v6h-1zM1010 80h1v8h-1zM1011 79h1v8h-1zM1012 79h1v9h-1zM1013 79h1v7h-1zM1014 82h1v6h-1zM1015 79h1v9h-1zM1016 82h1v5h-1zM1017 79h1v9h-1zM1018 79h1v9h-1zM1019 80h1v8h-1zM1020 79h1v9h-1z" fill="#00ffff"/>
<path d="M21 592h1v7h-1zM22 592h1v9h-1zM23 592h1v9h-1zM24 592h1v9h-1zM25 592h1v6h-1zM26 592h1v9h-1zM27 592h1v8h-1zM28 592h1v9h-1zM29 593h1v8h-1zM30 592h1v6h-1zM31 592h1v9h-1zM32 592h1v9h-1zM33 592h1v6h-1zM34 592h1v9h-1zM35 592h1v7h-1zM36 589h1v11h-1zM37 592h1v9h-1zM38 592h1v9h-1zM39 592h1v9h-1zM40 592h1v6h-1zM41 595h1v5h-1zM42 592h1v8h-1zM43 592h1v9h-1zM44 592h1v9h-1zM45 592h1v9h-1zM46 592h1v6h-1zM47 592h1v8h-1zM48 592h1v7h-1zM49 593h1v8h-1zM50 592h1v9h-1zM51 592h1v8h-1zM52 592h1v7h-1zM53 594h1v7h-1zM54 592h1v8h-1zM55 592h1v6h-1zM56 595h1v6h-1zM57 592h1v9h-1zM58 592h1v9h-1zM59 592h1v9h-1zM60 592h1v7h-1zM61 592h1v9h-1zM62 592h1v9h-1zM63 592h1v8h-1zM64 594h1v7h-1zM65 592h1v6h-1zM66 592h1v9h-1zM67 592h1v9h-1zM68 594h1v7h-1zM69 592h1v8h-1zM70 593h1v5h-1zM71 592h1v7h-1zM72 594h1v6h-1zM73 592h1v9h-1zM74 592h1v8h-1zM75 592h1v12h-1zM76 592h1v9h-1zM77 592h1v9h-1zM78 592h1v8h-1zM79 592h1v7h-1zM80 592h1v9h-1zM81 592h1v6h-1zM82 592h1v6h-1zM83 592h1v9h-1zM84 592h1v9h-1zM85 592h1v9h-1zM86 592h1v7h-1zM87 591h1v10h-1zM88 592h1v9h-1zM89 592h1v6h-1zM90 594h1v4h-1zM91 592h1v9h-1zM92 592h1v7h-1zM93 592h1v8h-1zM94 592h1v9h-1zM95 592h1v8h-1zM96 592h1v8h-1zM97 592h1v9h-1zM98 592h1v6h-1zM99 592h1v9h-1zM100 592h1v8h-1zM101 592h1v9h-1zM102 592h1v9h-1zM103 592h1v9h-1zM104 592h1v9h-1zM105 592h1v6h-1zM106 590h1v8h-1zM107 592h1v9h-1zM108 592h1v9h-1zM109 592h1v9h-1zM110 592h1v7h-1zM111 592h1v6h-1zM112 592h1v6h-1zM113 592h1v9h-1zM114 592h1v6h-1zM115 592h1v9h-1zM116 592h1v9h-1zM117 592h1v6h-1zM118 592h1v6h-1zM119 592h1v9h-1zM120 589h1v12h-1zM121 592h1v9h-1zM122 592h1v6h-1zM123 592h1v6h-1zM124 592h1v6h-1zM125 589h1v12h-1zM126 579h1v19h-1zM127 565h1v23h-1zM128 555h1v19h-1zM129 550h1v14h-1zM130 550h1v9h-1zM131 550h1v11h-1zM132 552h1v11h-1zM133 554h1v12h-1zM134 557h1v11h-1zM135 559h1v11h-1zM136 561h1v9h-1zM137 562h1v8h-1zM138 559h1v10h-1zM139 558h1v10h-1zM140 557h1v10h-1zM141 556h1v10h-1zM142 555h1v10h-1zM143 555h1v9h-1zM144 555h1v8h-1zM145 556h1v9h-1zM146 556h1v10h-1zM147 557h1v10h-1zM148 558h1v9h-1zM149 558h1v10h-1zM150 559h1v10h-1zM151 560h1v9h-1zM152 560h1v9h-1zM153 563h1v6h-1zM154 563h1v6h-1zM155 559h1v10h-1zM156 562h1v6h-1zM157 558h1v10h-1zM158 558h1v9h-1zM159 559h1v8h-1zM160 557h1v10h-1zM161 557h1v9h-1zM162 557h1v9h-1zM163 558h1v8h-1zM164 557h1v9h-1zM165 557h1v9h-1zM166 557h1v9h-1zM167 557h1v9h-1zM168 557h1v10h-1zM169 558h1v7h-1zM170 560h1v4h-1zM171 558h1v9h-1zM172 561h1v6h-1zM173 558h1v9h-1zM174 558h1v9h-1zM175 558h1v9h-1zM176 558h1v9h-1zM177 558h1v9h-1zM178 558h1v9h-1zM179 558h1v9h-1zM180 558h1v9h-1zM181 558h1v9h-1zM182 561h1v6h-1zM183 558h1v9h-1zM184 559h1v8h-1zM185 560h1v7h-1zM186 558h1v9h-1zM187 558h1v9h-1zM188 560h1v7h-1zM189 558h1v9h-1zM190 559h1v8h-1zM191 558h1v9h-1zM192 558h1v9h-1zM193 558h1v9h-1zM194 558h1v9h-1zM195 558h1v9h-1zM196 558h1v9h-1zM197 558h1v9h-1zM198 558h1v9h-1zM199 558h1v9h-1zM200 558h1v9h-1zM201 558h1v9h-1zM202 558h1v9h-1zM203 558h1v9h-1zM204 558h1v9h-1zM205 559h1v8h-1zM206 559h1v8h-1zM207 559h1v8h-1zM208 558h1v9h-1zM209 558h1v9h-1zM210 561h1v6h-1zM211 559h1v8h-1zM212 558h1v9h-1zM213 558h1v9h-1zM214 558h1v9h-1zM215 560h1v7h-1zM216 557h1v10h-1zM217 558h1v9h-1zM218 558h1v9h-1zM219 559h1v8h-1zM220 558h1v9h-1zM221 558h1v9h-1zM222 558h1v9h-1zM223 560h1v7h-1zM224 561h1v6h-1zM225 558h1v9h-1zM226 558h1v9h-1zM227 558h1v9h-1zM228 558h1v9h-1zM229 559h1v8h-1zM230 560h1v7h-1zM231 560h1v7h-1zM232 558h1v9h-1zM233 558h1v9h-1zM234 558h1v9h-1zM235 558h1v9h-1zM236 558h1v9h-1zM237 558h1v9h-1zM238 560h1v7h-1zM239 558h1v9h-1zM240 558h1v9h-1zM241 558h1v9h-1zM242 560h1v9h-1zM243 558h1v9h-1zM244 560h1v7h-1zM245 558h1v9h-1zM246 558h1v9h-1zM247 558h1v9h-1zM248 559h1v8h-1zM249 558h1v9h-1zM250 558h1v9h-1zM251 558h1v9h-1zM252 561h1v6h-1zM253 559h1v8h-1zM254 560h1v7h-1zM255 558h1v9h-1zM256 560h1v7h-1zM257 558h1v9h-1zM258 558h1v9h-1zM259 558h1v9h-1zM260 558h1v9h-1zM261 558h1v9h-1zM262 561h1v6h-1zM263 558h1v9h-1zM264 558h1v6h-1zM265 560h1v7h-1zM266 560h1v7h-1zM267 558h1v9h-1zM268 558h1v9h-1zM269 558h1v9h-1zM270 558h1v9h-1zM271 559h1v8h-1zM272 561h1v6h-1zM273 558h1v9h-1zM274 558h1v9h-1zM275 558h1v9h-1zM276 561h1v6h-1zM277 558h1v9h-1zM278 558h1v7h-1zM279 558h1v9h-1zM280 558h1v9h-1zM281 558h1v9h-1zM282 559h1v8h-1zM283 558h1v9h-1zM284 558h1v9h-1zM285 558h1v9h-1zM286 558h1v9h-1zM287 558h1v9h-1zM288 560h1v7h-1zM289 560h1v7h-1zM290 561h1v6h-1zM291 558h1v9h-1zM292 560h1v7h-1zM293 561h1v6h-1zM294 558h1v9h-1zM295 559h1v8h-1zM296 558h1v9h-1zM297 558h1v9h-1zM298 559h1v8h-1zM299 561h1v6h-1zM300 558h1v9h-1zM301 561h1v6h-1zM302 558h1v9h-1zM303 561h1v6h-1zM304 558h1v9h-1zM305 558h1v9h-1zM306 561h1v6h-1zM307 558h1v9h-1zM308 561h1v6h-1zM309 561h1v6h-1zM310 561h1v8h-1zM311 558h1v9h-1zM312 560h1v7h-1zM313 558h1v9h-1zM314 558h1v9h-1zM315 558h1v9h-1zM316 558h1v9h-1zM317 559h1v8h-1zM318 558h1v9h-1zM319 558h1v9h-1zM320 558h1v10h-1zM321 561h1v6h-1zM322 558h1v9h-1zM323 557h1v10h-1zM324 558h1v9h-1zM325 559h1v8h-1zM326 558h1v12h-1zM327 560h1v7h-1zM328 558h1v9h-1zM329 559h1v8h-1zM330 558h1v9h-1zM331 559h1v8h-1zM332 559h1v8h-1zM333 559h1v8h-1zM334 561h1v6h-1zM335 561h1v6h-1zM336 558h1v9h-1zM337 558h1v9h-1zM338 558h1v9h-1zM339 560h1v7h-1zM340 560h1v7h-1zM341 558h1v9h-1zM342 558h1v9h-1zM343 558h1v9h-1zM344 558h1v9h-1zM345 558h1v9h-1zM346 558h1v9h-1zM347 558h1v9h-1zM348 559h1v8h-1zM349 558h1v9h-1zM350 560h1v7h-1zM351 558h1v9h-1zM352 558h1v9h-1zM353 559h1v8h-1zM354 558h1v9h-1zM355 558h1v9h-1zM356 558h1v9h-1zM357 558h1v9h-1zM358 558h1v9h-1zM359 559h1v8h-1zM360 558h1v9h-1zM361 558h1v9h-1zM362 558h1v9h-1zM363 558h1v9h-1zM364 558h1v9h-1zM365 559h1v8h-1zM366 558h1v9h-1zM367 559h1v8h-1zM368 558h1v9h-1zM369 558h1v9h-1zM370 558h1v9h-1zM371 558h1v9h-1zM372 558h1v9h-1zM373 558h1v9h-1zM374 558h1v9h-1zM375 558h1v9h-1zM376 558h1v9h-1zM377 561h1v6h-1zM378 558h1v9h-1zM379 558h1v9h-1zM380 560h1v7h-1zM381 558h1v9h-1zM382 558h1v9h-1zM383 558h1v9h-1zM384 558h1v9h-1zM385 561h1v6h-1zM386 558h1v9h-1zM387 559h1v7h-1zM388 558h1v9h-1zM389 558h1v9h-1zM390 561h1v6h-1zM391 558h1v9h-1zM392 556h1v11h-1zM393 560h1v7h-1zM394 561h1v6h-1zM395 558h1v9h-1zM396 561h1v6h-1zM397 558h1v9h-1zM398 560h1v7h-1zM399 558h1v9h-1zM400 558h1v9h-1zM401 560h1v10h-1zM402 558h1v9h-1zM403 558h1v9h-1zM404 558h1v9h-1zM405 556h1v11h-1zM406 558h1v9h-1zM407 558h1v9h-1zM408 555h1v12h-1zM409 558h1v9h-1zM410 558h1v9h-1zM411 559h1v9h-1zM412 558h1v9h-1zM413 561h1v6h-1zM414 558h1v9h-1zM415 558h1v9h-1zM416 558h1v9h-1zM417 559h1v7h-1zM418 558h1v9h-1zM419 558h1v9h-1zM420 558h1v9h-1zM421 558h1v9h-1zM422 558h1v9h-1zM423 560h1v7h-1zM424 558h1v9h-1zM425 558h1v11h-1zM426 558h1v9h-1zM427 558h1v9h-1zM428 558h1v10h-1zM429 558h1v9h-1zM430 558h1v9h-1zM431 558h1v9h-1zM432 558h1v9h-1zM433 558h1v7h-1zM434 558h1v9h-1zM435 558h1v6h-1zM436 558h1v9h-1zM437 559h1v8h-1zM438 561h1v6h-1zM439 558h1v9h-1zM440 558h1v9h-1zM441 558h1v9h-1zM442 558h1v9h-1zM443 558h1v9h-1zM444 558h1v9h-1zM445 558h1v9h-1zM446 561h1v6h-1zM447 561h1v6h-1zM448 561h1v6h-1zM449 561h1v6h-1zM450 558h1v9h-1zM451 558h1v9h-1zM452 559h1v8h-1zM453 559h1v8h-1zM454 558h1v9h-1zM455 558h1v9h-1zM456 558h1v9h-1zM457 558h1v9h-1zM458 558h1v9h-1zM459 561h1v6h-1zM460 558h1v9h-1zM461 561h1v6h-1zM462 558h1v9h-1zM463 558h1v10h-1zM464 558h1v9h-1zM465 561h1v6h-1zM466 558h1v9h-1zM467 558h1v9h-1zM468 558h1v9h-1zM469 558h1v9h-1zM470 558h1v9h-1zM471 560h1v7h-1zM472 558h1v9h-1zM473 556h1v11h-1zM474 558h1v9h-1zM475 558h1v9h-1zM476 558h1v9h-1zM477 560h1v7h-1zM478 561h1v6h-1zM479 558h1v9h-1zM480 558h1v9h-1zM481 559h1v8h-1zM482 559h1v8h-1zM483 560h1v7h-1zM484 558h1v9h-1zM485 560h1v7h-1zM486 559h1v8h-1zM487 558h1v9h-1zM488 561h1v6h-1zM489 558h1v9h-1zM490 558h1v9h-1zM491 558h1v9h-1zM492 558h1v9h-1zM493 559h1v8h-1zM494 558h1v9h-1zM495 560h1v7h-1zM496 558h1v9h-1zM497 558h1v9h-1zM498 561h1v8h-1zM499 560h1v7h-1zM500 561h1v6h-1zM501 558h1v9h-1zM502 556h1v11h-1zM503 561h1v3h-1zM504 558h1v9h-1zM505 558h1v9h-1zM506 558h1v9h-1zM507 559h1v8h-1zM508 558h1v9h-1zM509 558h1v9h-1zM510 558h1v9h-1zM511 558h1v9h-1zM512 558h1v9h-1zM513 558h1v9h-1zM514 561h1v6h-1zM515 558h1v9h-1zM516 559h1v8h-1zM517 558h1v9h-1zM518 558h1v9h-1zM519 558h1v9h-1zM520 558h1v9h-1zM521 558h1v9h-1zM522 559h1v8h-1zM523 558h1v9h-1zM524 558h1v9h-1zM525 560h1v7h-1zM526 561h1v6h-1zM527 559h1v8h-1zM528 559h1v8h-1zM529 561h1v6h-1zM530 558h1v9h-1zM531 558h1v9h-1zM532 558h1v9h-1zM533 558h1v9h-1zM534 558h1v9h-1zM535 561h1v6h-1zM536 559h1v8h-1zM537 558h1v8h-1zM538 558h1v9h-1zM539 558h1v9h-1zM540 558h1v9h-1zM541 561h1v6h-1zM542 558h1v9h-1zM543 558h1v9h-1zM544 558h1v9h-1zM545 561h1v6h-1zM546 558h1v9h-1zM547 558h1v7h-1zM548 558h1v9h-1zM549 561h1v6h-1zM550 558h1v9h-1zM551 558h1v9h-1zM552 558h1v9h-1zM553 559h1v8h-1zM554 558h1v9h-1zM555 561h1v6h-1zM556 558h1v9h-1zM557 559h1v8h-1zM558 558h1v9h-1zM559 561h1v6h-1zM560 558h1v9h-1zM561 561h1v6h-1zM562 560h1v7h-1zM563 560h1v9h-1zM564 558h1v9h-1zM565 558h1v12h-1zM566 558h1v9h-1zM567 561h1v6h-1zM568 558h1v9h-1zM569 558h1v9h-1zM570 558h1v9h-1zM571 558h1v9h-1zM572 558h1v9h-1zM573 558h1v9h-1zM574 561h1v6h-1zM575 558h1v9h-1zM576 558h1v9h-1zM577 558h1v9h-1zM578 558h1v9h-1zM579 558h1v9h-1zM580 561h1v6h-1zM581 558h1v9h-1zM582 555h1v12h-1zM583 558h1v9h-1zM584 561h1v6h-1zM585 561h1v6h-1zM586 559h1v8h-1zM587 559h1v8h-1zM588 558h1v9h-1zM589 559h1v8h-1zM590 560h1v7h-1zM591 558h1v9h-1zM592 558h1v9h-1zM593 558h1v9h-1zM594 559h1v8h-1zM595 555h1v12h-1zM596 558h1v9h-1zM597 558h1v9h-1zM598 558h1v9h-1zM599 561h1v6h-1zM600 558h1v9h-1zM601 558h1v9h-1zM602 560h1v7h-1zM603 557h1v10h-1zM604 558h1v9h-1zM605 558h1v9h-1zM606 558h1v9h-1zM607 559h1v8h-1zM608 560h1v7h-1zM609 559h1v5h-1zM610 558h1v9h-1zM611 558h1v9h-1zM612 558h1v9h-1zM613 558h1v9h-1zM614 558h1v9h-1zM615 558h1v9h-1zM616 560h1v7h-1zM617 558h1v9h-1zM618 558h1v9h-1zM619 561h1v6h-1zM620 558h1v9h-1zM621 558h1v9h-1zM622 561h1v6h-1zM623 558h1v9h-1zM624 558h1v9h-1zM625 561h1v6h-1zM626 560h1v7h-1zM627 558h1v9h-1zM628 559h1v8h-1zM629 558h1v9h-1zM630 558h1v9h-1zM631 559h1v8h-1zM632 561h1v6h-1zM633 558h1v9h-1zM634 558h1v9h-1zM635 559h1v8h-1zM636 559h1v8h-1zM637 560h1v7h-1zM638 558h1v9h-1zM639 558h1v9h-1zM640 560h1v7h-1zM641 558h1v9h-1zM642 558h1v9h-1zM643 558h1v9h-1zM644 556h1v11h-1zM645 558h1v9h-1zM646 558h1v9h-1zM647 560h1v7h-1zM648 558h1v9h-1zM649 561h1v6h-1zM650 558h1v9h-1zM651 558h1v9h-1zM652 558h1v9h-1zM653 558h1v8h-1zM654 559h1v8h-1zM655 559h1v9h-1zM656 560h1v7h-1zM657 558h1v9h-1zM658 558h1v9h-1zM659 558h1v9h-1zM660 558h1v9h-1zM661 558h1v9h-1zM662 558h1v9h-1zM663 561h1v6h-1zM664 560h1v7h-1zM665 558h1v9h-1zM666 558h1v9h-1zM667 560h1v7h-1zM668 558h1v9h-1zM669 558h1v9h-1zM670 558h1v9h-1zM671 561h1v8h-1zM672 558h1v9h-1zM673 558h1v9h-1zM674 558h1v9h-1zM675 558h1v9h-1zM676 559h1v10h-1zM677 559h1v8h-1zM678 558h1v9h-1zM679 559h1v8h-1zM680 559h1v8h-1zM681 561h1v6h-1zM682 559h1v8h-1zM683 559h1v8h-1zM684 560h1v7h-1zM685 558h1v9h-1zM686 558h1v9h-1zM687 558h1v9h-1zM688 559h1v8h-1zM689 558h1v9h-1zM690 560h1v7h-1zM691 558h1v9h-1zM692 558h1v9h-1zM693 558h1v9h-1zM694 560h1v7h-1zM695 558h1v9h-1zM696 558h1v9h-1zM697 559h1v8h-1zM698 558h1v9h-1zM699 558h1v9h-1zM700 558h1v9h-1zM701 558h1v9h-1zM702 558h1v9h-1zM703 558h1v9h-1zM704 560h1v7h-1zM705 558h1v9h-1zM706 558h1v9h-1zM707 558h1v9h-1zM708 558h1v9h-1zM709 561h1v6h-1zM710 558h1v7h-1zM711 559h1v5h-1zM712 558h1v9h-1zM713 561h1v6h-1zM714 560h1v7h-1zM715 560h1v7h-1zM716 558h1v9h-1zM717 558h1v9h-1zM718 558h1v12h-1zM719 558h1v9h-1zM720 558h1v9h-1zM721 557h1v10h-1zM722 556h1v11h-1zM723 558h1v9h-1zM724 560h1v7h-1zM725 558h1v9h-1zM726 558h1v9h-1zM727 558h1v9h-1zM728 561h1v6h-1zM729 559h1v8h-1zM730 560h1v7h-1zM731 558h1v9h-1zM732 556h1v11h-1zM733 558h1v9h-1zM734 558h1v9h-1zM735 558h1v11h-1zM736 558h1v9h-1zM737 558h1v12h-1zM738 558h1v9h-1zM739 558h1v9h-1zM740 561h1v6h-1zM741 558h1v9h-1zM742 558h1v9h-1zM743 558h1v9h-1zM744 558h1v9h-1zM745 558h1v9h-1zM746 558h1v8h-1zM747 558h1v9h-1zM748 558h1v9h-1zM749 558h1v9h-1zM750 558h1v9h-1zM751 560h1v7h-1zM752 558h1v9h-1zM753 558h1v9h-1zM754 561h1v6h-1zM755 558h1v9h-1zM756 558h1v9h-1zM757 558h1v9h-1zM758 558h1v9h-1zM759 558h1v9h-1zM760 558h1v9h-1zM761 558h1v9h-1zM762 560h1v7h-1zM763 559h1v8h-1zM764 561h1v6h-1zM765 555h1v12h-1zM766 561h1v3h-1zM767 558h1v9h-1zM768 558h1v9h-1zM769 560h1v7h-1zM770 559h1v9h-1zM771 561h1v6h-1zM772 558h1v9h-1zM773 558h1v9h-1zM774 558h1v9h-1zM775 561h1v6h-1zM776 558h1v9h-1zM777 558h1v9h-1zM778 558h1v9h-1zM779 558h1v9h-1zM780 561h1v5h-1zM781 558h1v9h-1zM782 561h1v6h-1zM783 558h1v9h-1zM784 558h1v9h-1zM785 558h1v9h-1zM786 559h1v8h-1zM787 558h1v9h-1zM788 559h1v8h-1zM789 558h1v9h-1zM790 558h1v9h-1zM791 560h1v7h-1zM792 558h1v9h-1zM793 558h1v9h-1zM794 561h1v6h-1zM795 558h1v9h-1zM796 558h1v9h-1zM797 561h1v6h-1zM798 558h1v9h-1zM799 559h1v8h-1zM800 558h1v9h-1zM801 558h1v9h-1zM802 559h1v8h-1zM803 561h1v6h-1zM804 558h1v9h-1zM805 558h1v9h-1zM806 558h1v9h-1zM807 558h1v9h-1zM808 559h1v8h-1zM809 558h1v9h-1zM810 559h1v8h-1zM811 558h1v9h-1zM812 558h1v9h-1zM813 558h1v9h-1zM814 558h1v9h-1zM815 558h1v9h-1zM816 558h1v9h-1zM817 558h1v9h-1zM818 558h1v9h-1zM819 558h1v9h-1zM820 561h1v6h-1zM821 558h1v9h-1zM822 559h1v8h-1zM823 558h1v9h-1zM824 558h1v9h-1zM825 558h1v9h-1zM826 558h1v9h-1zM827 558h1v9h-1zM828 559h1v10h-1zM829 558h1v9h-1zM830 559h1v8h-1zM831 559h1v8h-1zM832 558h1v9h-1zM833 558h1v9h-1zM834 558h1v9h-1zM835 558h1v9h-1zM836 558h1v9h-1zM837 559h1v8h-1zM838 560h1v7h-1zM839 559h1v8h-1zM840 558h1v9h-1zM841 558h1v9h-1zM842 561h1v6h-1zM843 560h1v7h-1zM844 561h1v6h-1zM845 558h1v9h-1zM846 558h1v9h-1zM847 560h1v7h-1zM848 558h1v9h-1zM849 558h1v9h-1zM850 561h1v6h-1zM851 558h1v9h-1zM852 558h1v9h-1zM853 558h1v9h-1zM854 558h1v9h-1zM855 555h1v12h-1zM856 558h1v9h-1zM857 558h1v9h-1zM858 558h1v9h-1zM859 559h1v11h-1zM860 558h1v9h-1zM861 558h1v7h-1zM862 558h1v9h-1zM863 558h1v9h-1zM864 558h1v9h-1zM865 558h1v9h-1zM866 558h1v9h-1zM867 558h1v9h-1zM868 558h1v9h-1zM869 558h1v9h-1zM870 558h1v9h-1zM871 558h1v9h-1zM872 558h1v9h-1zM873 558h1v9h-1zM874 558h1v9h-1zM875 558h1v9h-1zM876 559h1v8h-1zM877 558h1v9h-1zM878 558h1v9h-1zM879 558h1v6h-1zM880 558h1v9h-1zM881 558h1v9h-1zM882 558h1v9h-1zM883 561h1v6h-1zM884 558h1v9h-1zM885 558h1v9h-1zM886 560h1v7h-1zM887 558h1v9h-1zM888 558h1v9h-1zM889 558h1v9h-1zM890 559h1v8h-1zM891 561h1v6h-1zM892 558h1v9h-1zM893 558h1v9h-1zM894 561h1v6h-1zM895 558h1v9h-1zM896 559h1v8h-1zM897 558h1v9h-1zM898 560h1v7h-1zM899 558h1v9h-1zM900 558h1v9h-1zM901 558h1v9h-1zM902 558h1v9h-1zM903 558h1v9h-1zM904 558h1v9h-1zM905 559h1v8h-1zM906 558h1v12h-1zM907 558h1v9h-1zM908 558h1v9h-1zM909 558h1v9h-1zM910 558h1v9h-1zM911 561h1v6h-1zM912 558h1v9h-1zM913 558h1v9h-1zM914 558h1v9h-1zM915 558h1v9h-1zM916 559h1v8h-1zM917 558h1v9h-1zM918 558h1v9h-1zM919 558h1v9h-1zM920 561h1v6h-1zM921 558h1v9h-1zM922 558h1v9h-1zM923 560h1v7h-1zM924 558h1v9h-1zM925 558h1v9h-1zM926 561h1v6h-1zM927 559h1v8h-1zM928 558h1v9h-1zM929 558h1v9h-1zM930 559h1v8h-1zM931 558h1v9h-1zM932 558h1v9h-1zM933 560h1v7h-1zM934 558h1v9h-1zM935 558h1v9h-1zM936 558h1v9h-1zM937 558h1v9h-1zM938 558h1v9h-1zM939 558h1v9h-1zM940 558h1v9h-1zM941 558h1v9h-1zM942 558h1v9h-1zM943 558h1v9h-1zM944 558h1v9h-1zM945 561h1v6h-1zM946 558h1v9h-1zM947 558h1v9h-1zM948 561h1v6h-1zM949 558h1v9h-1zM950 558h1v9h-1zM951 560h1v7h-1zM952 558h1v9h-1zM953 558h1v6h-1zM954 560h1v7h-1zM955 558h1v9h-1zM956 558h1v9h-1zM957 560h1v7h-1zM958 558h1v9h-1zM959 558h1v9h-1zM960 559h1v8h-1zM961 558h1v9h-1zM962 558h1v9h-1zM963 558h1v9h-1zM964 558h1v9h-1zM965 558h1v9h-1zM966 560h1v7h-1zM967 558h1v9h-1zM968 558h1v9h-1zM969 558h1v9h-1zM970 558h1v9h-1zM971 560h1v7h-1zM972 561h1v6h-1zM973 558h1v9h-1zM974 558h1v9h-1zM975 559h1v8h-1zM976 558h1v9h-1zM977 558h1v9h-1zM978 558h1v9h-1zM979 558h1v9h-1zM980 561h1v6h-1zM981 558h1v9h-1zM982 558h1v9h-1zM983 558h1v9h-1zM984 558h1v9h-1zM985 558h1v9h-1zM986 558h1v9h-1zM987 561h1v6h-1zM988 558h1v9h-1zM989 558h1v9h-1zM990 558h1v9h-1zM991 558h1v9h-1zM992 558h1v9h-1zM993 558h1v9h-1zM994 558h1v9h-1zM995 561h1v6h-1zM996 558h1v9h-1zM997 558h1v9h-1zM998 561h1v6h-1zM999 558h1v9h-1zM1000 561h1v6h-1zM1001 558h1v9h-1zM1002 558h1v9h-1zM1003 558h1v9h-1zM1004 560h1v7h-1zM1005 558h1v9h-1zM1006 561h1v6h-1zM1007 559h1v8h-1zM1008 558h1v9h-1zM1009 558h1v9h-1zM1010 559h1v8h-1zM1011 558h1v9h-1zM1012 558h1v9h-1zM1013 558h1v9h-1zM1014 558h1v9h-1zM1015 558h1v9h-1zM1016 560h1v7h-1zM1017 558h1v9h-1zM1018 558h1v9h-1zM1019 558h1v9h-1zM1020 560h1v7h-1z" fill="#ffff00"/>
<path d="M21 662h1v6h-1zM22 663h1v5h-1zM23 664h1v4h-1zM24 663h1v5h-1zM25 664h1v4h-1zM26 664h1v4h-1zM27 664h1v4h-1zM28 662h1v6h-1zM29 664h1v4h-1zM30 664h1v4h-1zM31 664h1v4h-1zM32 664h1v4h-1zM33 664h1v4h-1zM34 662h1v6h-1zM35 663h1v5h-1zM36 664h1v4h-1zM37 664h1v4h-1zM38 664h1v4h-1zM39 664h1v4h-1zM40 664h1v4h-1zM41 664h1v4h-1zM42 664h1v4h-1zM43 663h1v5h-1zM44 664h1v4h-1zM45 662h1v6h-1zM46 662h1v6h-1zM47 664h1v4h-1zM48 663h1v5h-1zM49 664h1v4h-1zM50 662h1v6h-1zM51 662h1v6h-1zM52 664h1v4h-1zM53 664h1v4h-1zM54 664h1v4h-1zM55 664h1v4h-1zM56 663h1v5h-1zM57 664h1v4h-1zM58 663h1v5h-1zM59 664h1v4h-1zM60 664h1v4h-1zM61 663h1v5h-1zM62 664h1v4h-1zM63 662h1v6h-1zM64 664h1v4h-1zM65 664h1v4h-1zM66 662h1v6h-1zM67 664h1v4h-1zM68 663h1v5h-1zM69 664h1v4h-1zM70 664h1v4h-1zM71 664h1v4h-1zM72 664h1v4h-1zM73 664h1v4h-1zM74 663h1v5h-1zM75 664h1v4h-1zM76 664h1v4h-1zM77 664h1v4h-1zM78 662h1v6h-1zM79 664h1v4h-1zM80 662h1v6h-1zM81 664h1v4h-1zM82 662h1v6h-1zM83 663h1v5h-1zM84 663h1v5h-1zM85 662h1v6h-1zM86 664h1v4h-1zM87 664h1v4h-1zM88 662h1v6h-1zM89 662h1v6h-1zM90 664h1v4h-1zM91 664h1v4h-1zM92 663h1v5h-1zM93 662h1v6h-1zM94 664h1v4h-1zM95 664h1v4h-1zM96 664h1v4h-1zM97 664h1v4h-1zM98 664h1v4h-1zM99 664h1v4h-1zM100 662h1v6h-1zM101 664h1v4h-1zM102 664h1v4h-1zM103 664h1v4h-1zM104 664h1v4h-1zM105 664h1v4h-1zM106 664h1v4h-1zM107 664h1v4h-1zM108 664h1v4h-1zM109 662h1v6h-1zM110 663h1v5h-1zM111 664h1v4h-1zM112 664h1v4h-1zM113 662h1v6h-1zM114 663h1v5h-1zM115 662h1v6h-1zM116 662h1v6h-1zM117 662h1v6h-1zM118 662h1v6h-1zM119 662h1v6h-1zM120 664h1v4h-1zM121 663h1v5h-1zM122 664h1v4h-1zM123 663h1v5h-1zM124 662h1v6h-1zM125 664h1v4h-1zM126 664h1v4h-1zM127 664h1v4h-1zM128 663h1v5h-1zM129 664h1v4h-1zM130 662h1v6h-1zM131 664h1v4h-1zM132 662h1v6h-1zM133 664h1v4h-1zM134 664h1v4h-1zM135 664h1v4h-1zM136 662h1v6h-1zM137 664h1v4h-1zM138 662h1v6h-1zM139 664h1v4h-1zM140 663h1v5h-1zM141 664h1v4h-1zM142 664h1v4h-1zM143 664h1v4h-1zM144 664h1v4h-1zM145 664h1v4h-1zM146 664h1v4h-1zM147 664h1v4h-1zM148 664h1v4h-1zM149 664h1v4h-1zM150 662h1v6h-1zM151 662h1v6h-1zM152 662h1v6h-1zM153 664h1v4h-1zM154 663h1v5h-1zM155 664h1v4h-1zM156 664h1v4h-1zM157 662h1v6h-1zM158 664h1v4h-1zM159 664h1v4h-1zM160 664h1v4h-1zM161 664h1v4h-1zM162 662h1v6h-1zM163 664h1v4h-1zM164 662h1v6h-1zM165 664h1v4h-1zM166 664h1v4h-1zM167 662h1v6h-1zM168 664h1v4h-1zM169 662h1v6h-1zM170 664h1v4h-1zM171 662h1v6h-1zM172 664h1v4h-1zM173 664h1v4h-1zM174 664h1v4h-1zM175 662h1v6h-1zM176 664h1v4h-1zM177 664h1v4h-1zM178 664h1v4h-1zM179 664h1v4h-1zM180 664h1v4h-1zM181 664h1v4h-1zM182 664h1v4h-1zM183 662h1v6h-1zM184 664h1v4h-1zM185 664h1v4h-1zM186 664h1v4h-1zM187 664h1v4h-1zM188 664h1v4h-1zM189 664h1v4h-1zM190 664h1v4h-1zM191 663h1v5h-1zM192 664h1v4h-1zM193 662h1v6h-1zM194 664h1v4h-1zM195 664h1v4h-1zM196 662h1v6h-1zM197 664h1v4h-1zM198 664h1v4h-1zM199 664h1v4h-1zM200 664h1v4h-1zM201 663h1v5h-1zM202 664h1v4h-1zM203 664h1v4h-1zM204 664h1v4h-1zM205 664h1v4h-1zM206 663h1v5h-1zM207 664h1v4h-1zM208 664h1v4h-1zM209 663h1v5h-1zM210 664h1v4h-1zM211 664h1v4h-1zM212 664h1v4h-1zM213 664h1v4h-1zM214 663h1v5h-1zM215 664h1v4h-1zM216 663h1v5h-1zM217 664h1v4h-1zM218 664h1v4h-1zM219 664h1v4h-1zM220 664h1v4h-1zM221 664h1v4h-1zM222 664h1v4h-1zM223 663h1v5h-1zM224 664h1v4h-1zM225 664h1v4h-1zM226 664h1v4h-1zM227 664h1v4h-1zM228 662h1v6h-1zM229 664h1v4h-1zM230 662h1v6h-1zM231 664h1v4h-1zM232 664h1v4h-1zM233 663h1v5h-1zM234 664h1v4h-1zM235 663h1v5h-1zM236 662h1v6h-1zM237 664h1v4h-1zM238 663h1v5h-1zM239 664h1v4h-1zM240 662h1v6h-1zM241 664h1v4h-1zM242 664h1v4h-1zM243 664h1v4h-1zM244 662h1v6h-1zM245 664h1v4h-1zM246 664h1v4h-1zM247 664h1v4h-1zM248 664h1v4h-1zM249 662h1v6h-1zM250 664h1v4h-1zM251 664h1v4h-1zM252 664h1v4h-1zM253 664h1v4h-1zM254 662h1v6h-1zM255 664h1v4h-1zM256 664h1v4h-1zM257 664h1v4h-1zM258 663h1v5h-1zM259 662h1v6h-1zM260 664h1v4h-1zM261 664h1v4h-1zM262 664h1v4h-1zM263 662h1v6h-1zM264 663h1v5h-1zM265 662h1v6h-1zM266 664h1v4h-1zM267 662h1v6h-1zM268 664h1v4h-1zM269 664h1v4h-1zM270 662h1v6h-1zM271 664h1v4h-1zM272 662h1v6h-1zM273 664h1v4h-1zM274 664h1v4h-1zM275 662h1v6h-1zM276 663h1v5h-1zM277 662h1v6h-1zM278 664h1v4h-1zM279 664h1v4h-1zM280 664h1v4h-1zM281 664h1v4h-1zM282 664h1v4h-1zM283 664h1v4h-1zM284 662h1v6h-1zM285 664h1v4h-1zM286 664h1v4h-1zM287 664h1v4h-1zM288 662h1v6h-1zM289 662h1v6h-1zM290 664h1v4h-1zM291 662h1v6h-1zM292 664h1v4h-1zM293 663h1v5h-1zM294 664h1v4h-1zM295 662h1v6h-1zM296 664h1v4h-1zM297 663h1v5h-1zM298 664h1v4h-1zM299 664h1v4h-1zM300 664h1v4h-1zM301 664h1v4h-1zM302 664h1v4h-1zM303 663h1v5h-1zM304 664h1v4h-1zM305 664h1v4h-1zM306 664h1v4h-1zM307 664h1v4h-1zM308 662h1v6h-1zM309 663h1v5h-1zM310 664h1v4h-1zM311 664h1v4h-1zM312 664h1v4h-1zM313 664h1v4h-1zM314 664h1v4h-1zM315 664h1v4h-1zM316 662h1v6h-1zM317 664h1v4h-1zM318 664h1v4h-1zM319 664h1v4h-1zM320 664h1v4h-1zM321 663h1v5h-1zM322 664h1v4h-1zM323 664h1v4h-1zM324 664h1v4h-1zM325 664h1v4h-1zM326 664h1v4h-1zM327 664h1v4h-1zM328 664h1v4h-1zM329 662h1v6h-1zM330 663h1v5h-1zM331 662h1v6h-1zM332 664h1v4h-1zM333 664h1v4h-1zM334 664h1v4h-1zM335 664h1v4h-1zM336 664h1v4h-1zM337 662h1v6h-1zM338 664h1v4h-1zM339 662h1v6h-1zM340 662h1v6h-1zM341 662h1v6h-1zM342 664h1v4h-1zM343 662h1v6h-1zM344 662h1v6h-1zM345 663h1v5h-1zM346 664h1v4h-1zM347 662h1v6h-1zM348 664h1v4h-1zM349 664h1v4h-1zM350 663h1v5h-1zM351 664h1v4h-1zM352 663h1v5h-1zM353 662h1v6h-1zM354 664h1v4h-1zM355 664h1v4h-1zM356 663h1v5h-1zM357 662h1v6h-1zM358 664h1v4h-1zM359 662h1v6h-1zM360 662h1v6h-1zM361 664h1v4h-1zM362 662h1v6h-1zM363 663h1v5h-1zM364 662h1v6h-1zM365 663h1v5h-1zM366 664h1v4h-1zM367 662h1v6h-1zM368 664h1v4h-1zM369 664h1v4h-1zM370 664h1v4h-1zM371 664h1v4h-1zM372 664h1v4h-1zM373 662h1v6h-1zM374 662h1v6h-1zM375 664h1v4h-1zM376 662h1v6h-1zM377 662h1v6h-1zM378 664h1v4h-1zM379 663h1v5h-1zM380 664h1v4h-1zM381 664h1v4h-1zM382 662h1v6h-1zM383 664h1v4h-1zM384 664h1v4h-1zM385 664h1v4h-1zM386 664h1v4h-1zM387 664h1v4h-1zM388 663h1v5h-1zM389 662h1v6h-1zM390 662h1v6h-1zM391 664h1v4h-1zM392 664h1v4h-1zM393 664h1v4h-1zM394 664h1v4h-1zM395 664h1v4h-1zM396 664h1v4h-1zM397 664h1v4h-1zM398 664h1v4h-1zM399 664h1v4h-1zM400 662h1v6h-1zM401 664h1v4h-1zM402 664h1v4h-1zM403 663h1v5h-1zM404 664h1v4h-1zM405 664h1v4h-1zM406 662h1v6h-1zM407 662h1v6h-1zM408 664h1v4h-1zM409 663h1v5h-1zM410 664h1v4h-1zM411 664h1v4h-1zM412 664h1v4h-1zM413 664h1v4h-1zM414 664h1v4h-1zM415 662h1v6h-1zM416 663h1v5h-1zM417 662h1v6h-1zM418 664h1v4h-1zM419 662h1v6h-1zM420 662h1v6h-1zM421 664h1v4h-1zM422 664h1v4h-1zM423 663h1v5h-1zM424 664h1v4h-1zM425 663h1v5h-1zM426 664h1v4h-1zM427 662h1v6h-1zM428 664h1v4h-1zM429 662h1v6h-1zM430 664h1v4h-1zM431 664h1v4h-1zM432 664h1v4h-1zM433 664h1v4h-1zM434 662h1v6h-1zM435 664h1v4h-1zM436 664h1v4h-1zM437 664h1v4h-1zM438 664h1v4h-1zM439 664h1v4h-1zM440 662h1v6h-1zM441 664h1v4h-1zM442 663h1v5h-1zM443 664h1v4h-1zM444 664h1v4h-1zM445 664h1v4h-1zM446 662h1v6h-1zM447 662h1v6h-1zM448 662h1v6h-1zM449 662h1v6h-1zM450 664h1v4h-1zM451 663h1v5h-1zM452 662h1v6h-1zM453 664h1v4h-1zM454 664h1v4h-1zM455 664h1v4h-1zM456 664h1v4h-1zM457 662h1v6h-1zM458 663h1v5h-1zM459 664h1v4h-1zM460 664h1v4h-1zM461 664h1v4h-1zM462 664h1v4h-1zM463 664h1v4h-1zM464 664h1v4h-1zM465 664h1v4h-1zM466 664h1v4h-1zM467 662h1v6h-1zM468 662h1v6h-1zM469 664h1v4h-1zM470 662h1v6h-1zM471 663h1v5h-1zM472 664h1v4h-1zM473 662h1v6h-1zM474 664h1v4h-1zM475 664h1v4h-1zM476 662h1v6h-1zM477 662h1v6h-1zM478 664h1v4h-1zM479 664h1v4h-1zM480 663h1v5h-1zM481 662h1v6h-1zM482 664h1v4h-1zM483 664h1v4h-1zM484 664h1v4h-1zM485 662h1v6h-1zM486 664h1v4h-1zM487 662h1v6h-1zM488 664h1v4h-1zM489 664h1v4h-1zM490 664h1v4h-1zM491 664h1v4h-1zM492 663h1v5h-1zM493 662h1v6h-1zM494 662h1v6h-1zM495 664h1v4h-1zM496 664h1v4h-1zM497 664h1v4h-1zM498 664h1v4h-1zM499 663h1v5h-1zM500 664h1v4h-1zM501 662h1v6h-1zM502 663h1v5h-1zM503 662h1v6h-1zM504 664h1v4h-1zM505 664h1v4h-1zM506 662h1v6h-1zM507 663h1v5h-1zM508 664h1v4h-1zM509 664h1v4h-1zM510 664h1v4h-1zM511 664h1v4h-1zM512 664h1v4h-1zM513 663h1v5h-1zM514 664h1v4h-1zM515 664h1v4h-1zM516 662h1v6h-1zM517 663h1v5h-1zM518 663h1v5h-1zM519 664h1v4h-1zM520 664h1v4h-1zM521 664h1v4h-1zM522 664h1v4h-1zM523 664h1v4h-1zM524 662h1v6h-1zM525 664h1v4h-1zM526 663h1v5h-1zM527 664h1v4h-1zM528 662h1v6h-1zM529 664h1v4h-1zM530 663h1v5h-1zM531 663h1v5h-1zM532 664h1v4h-1zM533 662h1v6h-1zM534 664h1v4h-1zM535 664h1v4h-1zM536 664h1v4h-1zM537 662h1v6h-1zM538 662h1v6h-1zM539 664h1v4h-1zM540 664h1v4h-1zM541 664h1v4h-1zM542 662h1v6h-1zM543 664h1v4h-1zM544 664h1v4h-1zM545 663h1v5h-1zM546 662h1v6h-1zM547 664h1v4h-1zM548 664h1v4h-1zM549 664h1v4h-1zM550 664h1v4h-1zM551 664h1v4h-1zM552 662h1v6h-1zM553 664h1v4h-1zM554 662h1v6h-1zM555 664h1v4h-1zM556 662h1v6h-1zM557 662h1v6h-1zM558 664h1v4h-1zM559 664h1v4h-1zM560 664h1v4h-1zM561 662h1v6h-1zM562 664h1v4h-1zM563 664h1v4h-1zM564 664h1v4h-1zM565 662h1v6h-1zM566 663h1v5h-1zM567 664h1v4h-1zM568 664h1v4h-1zM569 664h1v4h-1zM570 664h1v4h-1zM571 664h1v4h-1zM572 664h1v4h-1zM573 662h1v6h-1zM574 664h1v4h-1zM575 664h1v4h-1zM576 664h1v4h-1zM577 664h1v4h-1zM578 663h1v5h-1zM579 664h1v4h-1zM580 664h1v4h-1zM581 662h1v6h-1zM582 664h1v4h-1zM583 662h1v6h-1zM584 662h1v6h-1zM585 662h1v6h-1zM586 664h1v4h-1zM587 662h1v6h-1zM588 664h1v4h-1zM589 664h1v4h-1zM590 664h1v4h-1zM591 664h1v4h-1zM592 664h1v4h-1zM593 664h1v4h-1zM594 664h1v4h-1zM595 664h1v4h-1zM596 664h1v4h-1zM597 664h1v4h-1zM598 664h1v4h-1zM599 664h1v4h-1zM600 664h1v4h-1zM601 663h1v5h-1zM602 664h1v4h-1zM603 664h1v4h-1zM604 664h1v4h-1zM605 664h1v4h-1zM606 664h1v4h-1zM607 664h1v4h-1zM608 662h1v6h-1zM609 664h1v4h-1zM610 664h1v4h-1zM611 664h1v4h-1zM612 664h1v4h-1zM613 664h1v4h-1zM614 664h1v4h-1zM615 664h1v4h-1zM616 664h1v4h-1zM617 664h1v4h-1zM618 663h1v5h-1zM619 662h1v6h-1zM620 663h1v5h-1zM621 664h1v4h-1zM622 664h1v4h-1zM623 664h1v4h-1zM624 664h1v4h-1zM625 664h1v4h-1zM626 662h1v6h-1zM627 664h1v4h-1zM628 662h1v6h-1zM629 662h1v6h-1zM630 664h1v4h-1zM631 662h1v6h-1zM632 662h1v6h-1zM633 662h1v6h-1zM634 662h1v6h-1zM635 664h1v4h-1zM636 662h1v6h-1zM637 664h1v4h-1zM638 662h1v6h-1zM639 663h1v5h-1zM640 662h1v6h-1zM641 664h1v4h-1zM642 664h1v4h-1zM643 662h1v6h-1zM644 664h1v4h-1zM645 664h1v4h-1zM646 664h1v4h-1zM647 664h1v4h-1zM648 664h1v4h-1zM649 664h1v4h-1zM650 664h1v4h-1zM651 664h1v4h-1zM652 664h1v4h-1zM653 664h1v4h-1zM654 664h1v4h-1zM655 664h1v4h-1zM656 664h1v4h-1zM657 664h1v4h-1zM658 664h1v4h-1zM659 664h1v4h-1zM660 662h1v6h-1zM661 663h1v5h-1zM662 662h1v6h-1zM663 664h1v4h-1zM664 664h1v4h-1zM665 664h1v4h-1zM666 664h1v4h-1zM667 662h1v6h-1zM668 664h1v4h-1zM669 664h1v4h-1zM670 663h1v5h-1zM671 662h1v6h-1zM672 664h1v4h-1zM673 664h1v4h-1zM674 664h1v4h-1zM675 662h1v6h-1zM676 664h1v4h-1zM677 664h1v4h-1zM678 664h1v4h-1zM679 664h1v4h-1zM680 664h1v4h-1zM681 662h1v6h-1zM682 664h1v4h-1zM683 664h1v4h-1zM684 662h1v6h-1zM685 664h1v4h-1zM686 664h1v4h-1zM687 664h1v4h-1zM688 664h1v4h-1zM689 664h1v4h-1zM690 662h1v6h-1zM691 662h1v6h-1zM692 664h1v4h-1zM693 662h1v6h-1zM694 664h1v4h-1zM695 664h1v4h-1zM696 663h1v5h-1zM697 664h1v4h-1zM698 664h1v4h-1zM699 664h1v4h-1zM700 664h1v4h-1zM701 664h1v4h-1zM702 662h1v6h-1zM703 664h1v4h-1zM704 662h1v6h-1zM705 664h1v4h-1zM706 664h1v4h-1zM707 664h1v4h-1zM708 664h1v4h-1zM709 663h1v5h-1zM710 663h1v5h-1zM711 664h1v4h-1zM712 662h1v6h-1zM713 663h1v5h-1zM714 662h1v6h-1zM715 662h1v6h-1zM716 664h1v4h-1zM717 664h1v4h-1zM718 662h1v6h-1zM719 663h1v5h-1zM720 664h1v4h-1zM721 662h1v6h-1zM722 662h1v6h-1zM723 664h1v4h-1zM724 662h1v6h-1zM725 664h1v4h-1zM726 664h1v4h-1zM727 663h1v5h-1zM728 664h1v4h-1zM729 664h1v4h-1zM730 664h1v4h-1zM731 662h1v6h-1zM732 664h1v4h-1zM733 662h1v6h-1zM734 664h1v4h-1zM735 662h1v6h-1zM736 662h1v6h-1zM737 664h1v4h-1zM738 664h1v4h-1zM739 662h1v6h-1zM740 662h1v6h-1zM741 664h1v4h-1zM742 664h1v4h-1zM743 664h1v4h-1zM744 664h1v4h-1zM745 664h1v4h-1zM746 662h1v6h-1zM747 664h1v4h-1zM748 664h1v4h-1zM749 664h1v4h-1zM750 663h1v5h-1zM751 664h1v4h-1zM752 664h1v4h-1zM753 664h1v4h-1zM754 664h1v4h-1zM755 664h1v4h-1zM756 664h1v4h-1zM757 663h1v5h-1zM758 664h1v4h-1zM759 664h1v4h-1zM760 664h1v4h-1zM761 664h1v4h-1zM762 663h1v5h-1zM763 664h1v4h-1zM764 664h1v4h-1zM765 663h1v5h-1zM766 662h1v6h-1zM767 664h1v4h-1zM768 664h1v4h-1zM769 662h1v6h-1zM770 663h1v5h-1zM771 664h1v4h-1zM772 664h1v4h-1zM773 662h1v6h-1zM774 662h1v6h-1zM775 662h1v6h-1zM776 664h1v4h-1zM777 663h1v5h-1zM778 664h1v4h-1zM779 664h1v4h-1zM780 664h1v4h-1zM781 662h1v6h-1zM782 664h1v4h-1zM783 664h1v4h-1zM784 664h1v4h-1zM785 664h1v4h-1zM786 664h1v4h-1zM787 664h1v4h-1zM788 664h1v4h-1zM789 662h1v6h-1zM790 664h1v4h-1zM791 664h1v4h-1zM792 664h1v4h-1zM793 664h1v4h-1zM794 664h1v4h-1zM795 664h1v4h-1zM796 664h1v4h-1zM797 663h1v5h-1zM798 664h1v4h-1zM799 664h1v4h-1zM800 662h1v6h-1zM801 663h1v5h-1zM802 663h1v5h-1zM803 664h1v4h-1zM804 664h1v4h-1zM805 664h1v4h-1zM806 662h1v6h-1zM807 662h1v6h-1zM808 664h1v4h-1zM809 664h1v4h-1zM810 664h1v4h-1zM811 662h1v6h-1zM812 664h1v4h-1zM813 664h1v4h-1zM814 662h1v6h-1zM815 664h1v4h-1zM816 664h1v4h-1zM817 663h1v5h-1zM818 664h1v4h-1zM819 664h1v4h-1zM820 664h1v4h-1zM821 664h1v4h-1zM822 664h1v4h-1zM823 664h1v4h-1zM824 662h1v6h-1zM825 664h1v4h-1zM826 663h1v5h-1zM827 664h1v4h-1zM828 662h1v6h-1zM829 664h1v4h-1zM830 663h1v5h-1zM831 664h1v4h-1zM832 664h1v4h-1zM833 664h1v4h-1zM834 664h1v4h-1zM835 662h1v6h-1zM836 662h1v6h-1zM837 664h1v4h-1zM838 664h1v4h-1zM839 662h1v6h-1zM840 664h1v4h-1zM841 664h1v4h-1zM842 664h1v4h-1zM843 662h1v6h-1zM844 663h1v5h-1zM845 664h1v4h-1zM846 664h1v4h-1zM847 664h1v4h-1zM848 664h1v4h-1zM849 664h1v4h-1zM850 664h1v4h-1zM851 662h1v6h-1zM852 663h1v5h-1zM853 664h1v4h-1zM854 662h1v6h-1zM855 662h1v6h-1zM856 664h1v4h-1zM857 662h1v6h-1zM858 664h1v4h-1zM859 664h1v4h-1zM860 664h1v4h-1zM861 664h1v4h-1zM862 664h1v4h-1zM863 664h1v4h-1zM864 662h1v6h-1zM865 664h1v4h-1zM866 664h1v4h-1zM867 663h1v5h-1zM868 662h1v6h-1zM869 664h1v4h-1zM870 664h1v4h-1zM871 663h1v5h-1zM872 664h1v4h-1zM873 663h1v5h-1zM874 664h1v4h-1zM875 664h1v4h-1zM876 663h1v5h-1zM877 663h1v5h-1zM878 664h1v4h-1zM879 664h1v4h-1zM880 664h1v4h-1zM881 664h1v4h-1zM882 664h1v4h-1zM883 664h1v4h-1zM884 664h1v4h-1zM885 663h1v5h-1zM886 664h1v4h-1zM887 664h1v4h-1zM888 664h1v4h-1zM889 664h1v4h-1zM890 664h1v4h-1zM891 664h1v4h-1zM892 664h1v4h-1zM893 664h1v4h-1zM894 663h1v5h-1zM895 664h1v4h-1zM896 664h1v4h-1zM897 662h1v6h-1zM898 663h1v5h-1zM899 662h1v6h-1zM900 664h1v4h-1zM901 664h1v4h-1zM902 663h1v5h-1zM903 664h1v4h-1zM904 664h1v4h-1zM905 664h1v4h-1zM906 664h1v4h-1zM907 663h1v5h-1zM908 662h1v6h-1zM909 662h1v6h-1zM910 664h1v4h-1zM911 664h1v4h-1zM912 664h1v4h-1zM913 664h1v4h-1zM914 664h1v4h-1zM915 664h1v4h-1zM916 662h1v6h-1zM917 662h1v6h-1zM918 664h1v4h-1zM919 664h1v4h-1zM920 662h1v6h-1zM921 662h1v6h-1zM922 663h1v5h-1zM923 664h1v4h-1zM924 664h1v4h-1zM925 663h1v5h-1zM926 664h1v4h-1zM927 664h1v4h-1zM928 662h1v6h-1zM929 664h1v4h-1zM930 664h1v4h-1zM931 664h1v4h-1zM932 663h1v5h-1zM933 664h1v4h-1zM934 662h1v6h-1zM935 664h1v4h-1zM936 664h1v4h-1zM937 664h1v4h-1zM938 662h1v6h-1zM939 664h1v4h-1zM940 664h1v4h-1zM941 664h1v4h-1zM942 663h1v5h-1zM943 663h1v5h-1zM944 664h1v4h-1zM945 662h1v6h-1zM946 664h1v4h-1zM947 664h1v4h-1zM948 664h1v4h-1zM949 662h1v6h-1zM950 662h1v6h-1zM951 664h1v4h-1zM952 664h1v4h-1zM953 664h1v4h-1zM954 664h1v4h-1zM955 662h1v6h-1zM956 664h1v4h-1zM957 662h1v6h-1zM958 664h1v4h-1zM959 662h1v6h-1zM960 662h1v6h-1zM961 663h1v5h-1zM962 664h1v4h-1zM963 664h1v4h-1zM964 664h1v4h-1zM965 664h1v4h-1zM966 662h1v6h-1zM967 664h1v4h-1zM968 664h1v4h-1zM969 664h1v4h-1zM970 664h1v4h-1zM971 664h1v4h-1zM972 664h1v4h-1zM973 662h1v6h-1zM974 664h1v4h-1zM975 664h1v4h-1zM976 664h1v4h-1zM977 663h1v5h-1zM978 664h1v4h-1zM979 664h1v4h-1zM980 664h1v4h-1zM981 662h1v6h-1zM982 664h1v4h-1zM983 664h1v4h-1zM984 664h1v4h-1zM985 662h1v6h-1zM986 664h1v4h-1zM987 662h1v6h-1zM988 664h1v4h-1zM989 662h1v6h-1zM990 662h1v6h-1zM991 663h1v5h-1zM992 664h1v4h-1zM993 662h1v6h-1zM994 664h1v4h-1zM995 662h1v6h-1zM996 664h1v4h-1zM997 664h1v4h-1zM998 662h1v6h-1zM999 664h1v4h-1zM1000 662h1v6h-1zM1001 663h1v5h-1zM1002 664h1v4h-1zM1003 664h1v4h-1zM1004 664h1v4h-1zM1005 662h1v6h-1zM1006 664h1v4h-1zM1007 664h1v4h-1zM1008 664h1v4h-1zM1009 664h1v4h-1zM1010 664h1v4h-1zM1011 664h1v4h-1zM1012 664h1v4h-1zM1013 664h1v4h-1zM1014 663h1v5h-1zM1015 664h1v4h-1zM1016 664h1v4h-1zM1017 662h1v6h-1zM1018 664h1v4h-1zM1019 664h1v4h-1zM1020 664h1v4h-1z" fill="#00ff00"/>
<path d="M21 30h1v1h-1zM21 43h1v1h-1zM21 56h1v1h-1zM21 69h1v1h-1zM21 82h1v1h-1zM21 95h1v1h-1zM21 108h1v1h-1zM21 121h1v1h-1zM21 134h1v1h-1zM21 147h1v1h-1zM21 160h1v1h-1zM21 173h1v1h-1zM21 186h1v1h-1zM21 199h1v1h-1zM21 212h1v1h-1zM21 225h1v1h-1zM21 238h1v1h-1zM21 251h1v1h-1zM21 264h1v1h-1zM21 277h1v1h-1zM21 290h1v1h-1zM21 303h1v1h-1zM21 316h1v1h-1zM21 329h1v1h-1zM21 337h1v1h-1zM21 339h1v1h-1zM21 341h1v1h-1zM21 342h1v1h-1zM21 343h1v1h-1zM21 345h1v1h-1zM21 347h1v1h-1zM21 355h1v1h-1zM21 368h1v1h-1zM21 381h1v1h-1zM21 394h1v1h-1zM21 407h1v1h-1zM21 420h1v1h-1zM21 433h1v1h-1zM21 446h1v1h-1zM21 459h1v1h-1zM21 472h1v1h-1zM21 485h1v1h-1zM21 498h1v1h-1zM21 511h1v1h-1zM21 524h1v1h-1zM21 537h1v1h-1zM21 550h1v1h-1zM21 563h1v1h-1zM21 576h1v1h-1zM21 589h1v1h-1zM21 602h1v1h-1zM21 615h1v1h-1zM21 628h1v1h-1zM21 641h1v1h-1zM21 654h1v1h-1zM23 30h1v1h-1zM23 43h1v1h-1zM23 56h1v1h-1zM23 69h1v1h-1zM23 82h1v1h-1zM23 95h1v1h-1zM23 108h1v1h-1zM23 121h1v1h-1zM23 134h1v1h-1zM23 147h1v1h-1zM23 160h1v1h-1zM23 173h1v1h-1zM23 186h1v1h-1zM23 199h1v1h-1zM23 212h1v1h-1zM23 225h1v1h-1zM23 238h1v1h-1zM23 251h1v1h-1zM23 264h1v1h-1zM23 277h1v1h-1zM23 290h1v1h-1zM23 303h1v1h-1zM23 316h1v1h-1zM23 329h1v1h-1zM23 342h1v1h-1zM23 355h1v1h-1zM23 368h1v1h-1zM23 381h1v1h-1zM23 394h1v1h-1zM23 407h1v1h-1zM23 420h1v1h-1zM23 433h1v1h-1zM23 446h1v1h-1zM23 459h1v1h-1zM23 472h1v1h-1zM23 485h1v1h-1zM23 498h1v1h-1zM23 511h1v1h-1zM23 524h1v1h-1zM23 537h1v1h-1zM23 550h1v1h-1zM23 563h1v1h-1zM23 576h1v1h-1zM23 589h1v1h-1zM23 602h1v1h-1zM23 615h1v1h-1zM23 628h1v1h-1zM23 641h1v1h-1zM23 654h1v1h-1zM25 342h1v1h-1zM27 342h1v1h-1zM29 342h1v1h-1zM31 342h1v1h-1zM33 342h1v1h-1zM35 342h1v1h-1zM37 342h1v1h-1zM39 342h1v1h-1zM41 17h1v1h-1zM41 19h1v1h-1zM41 82h1v1h-1zM41 147h1v1h-1zM41 212h1v1h-1zM41 277h1v1h-1zM41 339h1v1h-1zM41 341h1v1h-1zM41 342h1v1h-1zM41 343h1v1h-1zM41 345h1v1h-1zM41 407h1v1h-1zM41 472h1v1h-1zM41 537h1v1h-1zM41 602h1v1h-1zM41 665h1v1h-1zM41 667h1v1h-1zM43 342h1v1h-1zM45 342h1v1h-1zM47 342h1v1h-1zM49 342h1v1h-1zM51 342h1v1h-1zM53 342h1v1h-1zM55 342h1v1h-1zM57 342h1v1h-1zM59 342h1v1h-1zM61 17h1v1h-1zM61 19h1v1h-1zM61 82h1v1h-1zM61 147h1v1h-1zM61 212h1v1h-1zM61 277h1v1h-1zM61 339h1v1h-1zM61 341h1v1h-1zM61 342h1v1h-1zM61 343h1v1h-1zM61 345h1v1h-1zM61 407h1v1h-1zM61 472h1v1h-1zM61 537h1v1h-1zM61 602h1v1h-1zM61 665h1v1h-1zM61 667h1v1h-1zM63 342h1v1h-1zM65 342h1v1h-1zM67 342h1v1h-1zM69 342h1v1h-1zM71 342h1v1h-1zM73 342h1v1h-1zM75 342h1v1h-1zM77 342h1v1h-1zM79 342h1v1h-1zM81 17h1v1h-1zM81 19h1v1h-1zM81 82h1v1h-1zM81 147h1v1h-1zM81 212h1v1h-1zM81 277h1v1h-1zM81 339h1v1h-1zM81 341h1v1h-1zM81 342h1v1h-1zM81 343h1v1h-1zM81 345h1v1h-1zM81 407h1v1h-1zM81 472h1v1h-1zM81 537h1v1h-1zM81 602h1v1h-1zM81 665h1v1h-1zM81 667h1v1h-1zM83 342h1v1h-1zM85 342h1v1h-1zM87 342h1v1h-1zM89 342h1v1h-1zM91 342h1v1h-1zM93 342h1v1h-1zM95 342h1v1h-1zM97 342h1v1h-1zM99 342h1v1h-1zM101 17h1v1h-1zM101 19h1v1h-1zM101 82h1v1h-1zM101 147h1v1h-1zM101 212h1v1h-1zM101 277h1v1h-1zM101 339h1v1h-1zM101 341h1v1h-1zM101 342h1v1h-1zM101 343h1v1h-1zM101 345h1v1h-1zM101 407h1v1h-1zM101 472h1v1h-1zM101 537h1v1h-1zM101 602h1v1h-1zM101 665h1v1h-1zM101 667h1v1h-1zM103 342h1v1h-1zM105 342h1v1h-1zM107 342h1v1h-1zM109 342h1v1h-1zM111 342h1v1h-1zM113 342h1v1h-1zM115 342h1v1h-1zM117 342h1v1h-1zM119 342h1v1h-1zM121 17h1v1h-1zM121 18h1v1h-1zM121 20h1v1h-1zM121 22h1v1h-1zM121 30h1v1h-1zM121 43h1v1h-1zM121 56h1v1h-1zM121 69h1v1h-1zM121 82h1v1h-1zM121 95h1v1h-1zM121 108h1v1h-1zM121 121h1v1h-1zM121 134h1v1h-1zM121 147h1v1h-1zM121 160h1v1h-1zM121 173h1v1h-1zM121 186h1v1h-1zM121 199h1v1h-1zM121 212h1v1h-1zM121 225h1v1h-1zM121 238h1v1h-1zM121 251h1v1h-1zM121 264h1v1h-1zM121 277h1v1h-1zM121 290h1v1h-1zM121 303h1v1h-1zM121 316h1v1h-1zM121 329h1v1h-1zM121 337h1v1h-1zM121 339h1v1h-1zM121 341h1v1h-1zM121 342h1v1h-1zM121 343h1v1h-1zM121 345h1v1h-1zM121 347h1v1h-1zM121 355h1v1h-1zM121 368h1v1h-1zM121 381h1v1h-1zM121 394h1v1h-1zM121 407h1v1h-1zM121 420h1v1h-1zM121 433h1v1h-1zM121 446h1v1h-1zM121 459h1v1h-1zM121 472h1v1h-1zM121 485h1v1h-1zM121 498h1v1h-1zM121 511h1v1h-1zM121 524h1v1h-1zM121 537h1v1h-1zM121 550h1v1h-1zM121 563h1v1h-1zM121 576h1v1h-1zM121 589h1v1h-1zM121 602h1v1h-1zM121 615h1v1h-1zM121 628h1v1h-1zM121 641h1v1h-1zM121 654h1v1h-1zM121 662h1v1h-1zM121 664h1v1h-1zM121 666h1v1h-1zM121 667h1v1h-1zM123 342h1v1h-1zM125 342h1v1h-1zM127 342h1v1h-1zM129 342h1v1h-1zM131 342h1v1h-1zM133 342h1v1h-1zM135 342h1v1h-1zM137 342h1v1h-1zM139 342h1v1h-1zM141 17h1v1h-1zM141 19h1v1h-1zM141 82h1v1h-1zM141 147h1v1h-1zM141 212h1v1h-1zM141 277h1v1h-1zM141 339h1v1h-1zM141 341h1v1h-1zM141 342h1v1h-1zM141 343h1v1h-1zM141 345h1v1h-1zM141 407h1v1h-1zM141 472h1v1h-1zM141 537h1v1h-1zM141 602h1v1h-1zM141 665h1v1h-1zM141 667h1v1h-1zM143 342h1v1h-1zM145 342h1v1h-1zM147 342h1v1h-1zM149 342h1v1h-1zM151 342h1v1h-1zM153 342h1v1h-1zM155 342h1v1h-1zM157 342h1v1h-1zM159 342h1v1h-1zM161 17h1v1h-1zM161 19h1v1h-1zM161 82h1v1h-1zM161 147h1v1h-1zM161 212h1v1h-1zM161 277h1v1h-1zM161 339h1v1h-1zM161 341h1v1h-1zM161 342h1v1h-1zM161 343h1v1h-1zM161 345h1v1h-1zM161 407h1v1h-1zM161 472h1v1h-1zM161 537h1v1h-1zM161 602h1v1h-1zM161 665h1v1h-1zM161 667h1v1h-1zM163 342h1v1h-1zM165 342h1v1h-1zM167 342h1v1h-1zM169 342h1v1h-1zM171 342h1v1h-1zM173 342h1v1h-1zM175 342h1v1h-1zM177 342h1v1h-1zM179 342h1v1h-1zM181 17h1v1h-1zM181 19h1v1h-1zM181 82h1v1h-1zM181 147h1v1h-1zM181 212h1v1h-1zM181 277h1v1h-1zM181 339h1v1h-1zM181 341h1v1h-1zM181 342h1v1h-1zM181 343h1v1h-1zM181 345h1v1h-1zM181 407h1v1h-1zM181 472h1v1h-1zM181 537h1v1h-1zM181 602h1v1h-1zM181 665h1v1h-1zM181 667h1v1h-1zM183 342h1v1h-1zM185 342h1v1h-1zM187 342h1v1h-1zM189 342h1v1h-1zM191 342h1v1h-1zM193 342h1v1h-1zM195 342h1v1h-1zM197 342h1v1h-1zM199 342h1v1h-1zM201 17h1v1h-1zM201 19h1v1h-1zM201 82h1v1h-1zM201 147h1v1h-1zM201 212h1v1h-1zM201 277h1v1h-1zM201 339h1v1h-1zM201 341h1v1h-1zM201 342h1v1h-1zM201 343h1v1h-1zM201 345h1v1h-1zM201 407h1v1h-1zM201 472h1v1h-1zM201 537h1v1h-1zM201 602h1v1h-1zM201 665h1v1h-1zM201 667h1v1h-1zM203 342h1v1h-1zM205 342h1v1h-1zM207 342h1v1h-1zM209 342h1v1h-1zM211 342h1v1h-1zM213 342h1v1h-1zM215 342h1v1h-1zM217 342h1v1h-1zM219 342h1v1h-1zM221 17h1v1h-1zM221 18h1v1h-1zM221 20h1v1h-1zM221 22h1v1h-1zM221 30h1v1h-1zM221 43h1v1h-1zM221 56h1v1h-1zM221 69h1v1h-1zM221 82h1v1h-1zM221 95h1v1h-1zM221 108h1v1h-1zM221 121h1v1h-1zM221 134h1v1h-1zM221 147h1v1h-1zM221 160h1v1h-1zM221 173h1v1h-1zM221 186h1v1h-1zM221 199h1v1h-1zM221 212h1v1h-1zM221 225h1v1h-1zM221 238h1v1h-1zM221 251h1v1h-1zM221 264h1v1h-1zM221 277h1v1h-1zM221 290h1v1h-1zM221 303h1v1h-1zM221 316h1v1h-1zM221 329h1v1h-1zM221 337h1v1h-1zM221 339h1v1h-1zM221 341h1v1h-1zM221 342h1v1h-1zM221 343h1v1h-1zM221 345h1v1h-1zM221 347h1v1h-1zM221 355h1v1h-1zM221 368h1v1h-1zM221 381h1v1h-1zM221 394h1v1h-1zM221 407h1v1h-1zM221 420h1v1h-1zM221 433h1v1h-1zM221 446h1v1h-1zM221 459h1v1h-1zM221 472h1v1h-1zM221 485h1v1h-1zM221 498h1v1h-1zM221 511h1v1h-1zM221 524h1v1h-1zM221 537h1v1h-1zM221 550h1v1h-1zM221 563h1v1h-1zM221 576h1v1h-1zM221 589h1v1h-1zM221 602h1v1h-1zM221 615h1v1h-1zM221 628h1v1h-1zM221 641h1v1h-1zM221 654h1v1h-1zM221 662h1v1h-1zM221 664h1v1h-1zM221 666h1v1h-1zM221 667h1v1h-1zM223 342h1v1h-1zM225 342h1v1h-1zM227 342h1v1h-1zM229 342h1v1h-1zM231 342h1v1h-1zM233 342h1v1h-1zM235 342h1v1h-1zM237 342h1v1h-1zM239 342h1v1h-1zM241 17h1v1h-1zM241 19h1v1h-1zM241 82h1v1h-1zM241 147h1v1h-1zM241 212h1v1h-1zM241 277h1v1h-1zM241 339h1v1h-1zM241 341h1v1h-1zM241 342h1v1h-1zM241 343h1v1h-1zM241 345h1v1h-1zM241 407h1v1h-1zM241 472h1v1h-1zM241 537h1v1h-1zM241 602h1v1h-1zM241 665h1v1h-1zM241 667h1v1h-1zM243 342h1v1h-1zM245 342h1v1h-1zM247 342h1v1h-1zM249 342h1v1h-1zM251 342h1v1h-1zM253 342h1v1h-1zM255 342h1v1h-1zM257 342h1v1h-1zM259 342h1v1h-1zM261 17h1v1h-1zM261 19h1v1h-1zM261 82h1v1h-1zM261 147h1v1h-1zM261 212h1v1h-1zM261 277h1v1h-1zM261 339h1v1h-1zM261 341h1v1h-1zM261 342h1v1h-1zM261 343h1v1h-1zM261 345h1v1h-1zM261 407h1v1h-1zM261 472h1v1h-1zM261 537h1v1h-1zM261 602h1v1h-1zM261 665h1v1h-1zM261 667h1v1h-1zM263 342h1v1h-1zM265 342h1v1h-1zM267 342h1v1h-1zM269 342h1v1h-1zM271 342h1v1h-1zM273 342h1v1h-1zM275 342h1v1h-1zM277 342h1v1h-1zM279 342h1v1h-1zM281 17h1v1h-1zM281 19h1v1h-1zM281 82h1v1h-1zM281 147h1v1h-1zM281 212h1v1h-1zM281 277h1v1h-1zM281 339h1v1h-1zM281 341h1v1h-1zM281 342h1v1h-1zM281 343h1v1h-1zM281 345h1v1h-1zM281 407h1v1h-1zM281 472h1v1h-1zM281 537h1v1h-1zM281 602h1v1h-1zM281 665h1v1h-1zM281 667h1v1h-1zM283 342h1v1h-1zM285 342h1v1h-1zM287 342h1v1h-1zM289 342h1v1h-1zM291 342h1v1h-1zM293 342h1v1h-1zM295 342h1v1h-1zM297 342h1v1h-1zM299 342h1v1h-1zM301 17h1v1h-1zM301 19h1v1h-1zM301 82h1v1h-1zM301 147h1v1h-1zM301 212h1v1h-1zM301 277h1v1h-1zM301 339h1v1h-1zM301 341h1v1h-1zM301 342h1v1h-1zM301 343h1v1h-1zM301 345h1v1h-1zM301 407h1v1h-1zM301 472h1v1h-1zM301 537h1v1h-1zM301 602h1v1h-1zM301 665h1v1h-1zM301 667h1v1h-1zM303 342h1v1h-1zM305 342h1v1h-1zM307 342h1v1h-1zM309 342h1v1h-1zM311 342h1v1h-1zM313 342h1v1h-1zM315 342h1v1h-1zM317 342h1v1h-1zM319 342h1v1h-1zM321 17h1v1h-1zM321 18h1v1h-1zM321 20h1v1h-1zM321 22h1v1h-1zM321 30h1v1h-1zM321 43h1v1h-1zM321 56h1v1h-1zM321 69h1v1h-1zM321 82h1v1h-1zM321 95h1v1h-1zM321 108h1v1h-1zM321 121h1v1h-1zM321 134h1v1h-1zM321 147h1v1h-1zM321 160h1v1h-1zM321 173h1v1h-1zM321 186h1v1h-1zM321 199h1v1h-1zM321 212h1v1h-1zM321 225h1v1h-1zM321 238h1v1h-1zM321 251h1v1h-1zM321 264h1v1h-1zM321 277h1v1h-1zM321 290h1v1h-1zM321 303h1v1h-1zM321 316h1v1h-1zM321 329h1v1h-1zM321 337h1v1h-1zM321 339h1v1h-1zM321 341h1v1h-1zM321 342h1v1h-1zM321 343h1v1h-1zM321 345h1v1h-1zM321 347h1v1h-1zM321 355h1v1h-1zM321 368h1v1h-1zM321 381h1v1h-1zM321 394h1v1h-1zM321 407h1v1h-1zM321 420h1v1h-1zM321 433h1v1h-1zM321 446h1v1h-1zM321 459h1v1h-1zM321 472h1v1h-1zM321 485h1v1h-1zM321 498h1v1h-1zM321 511h1v1h-1zM321 524h1v1h-1zM321 537h1v1h-1zM321 550h1v1h-1zM321 563h1v1h-1zM321 576h1v1h-1zM321 589h1v1h-1zM321 602h1v1h-1zM321 615h1v1h-1zM321 628h1v1h-1zM321 641h1v1h-1zM321 654h1v1h-1zM321 662h1v1h-1zM321 664h1v1h-1zM321 666h1v1h-1zM321 667h1v1h-1zM323 342h1v1h-1zM325 342h1v1h-1zM327 342h1v1h-1zM329 342h1v1h-1zM331 342h1v1h-1zM333 342h1v1h-1zM335 342h1v1h-1zM337 342h1v1h-1zM339 342h1v1h-1zM341 17h1v1h-1zM341 19h1v1h-1zM341 82h1v1h-1zM341 147h1v1h-1zM341 212h1v1h-1zM341 277h1v1h-1zM341 339h1v1h-1zM341 341h1v1h-1zM341 342h1v1h-1zM341 343h1v1h-1zM341 345h1v1h-1zM341 407h1v1h-1zM341 472h1v1h-1zM341 537h1v1h-1zM341 602h1v1h-1zM341 665h1v1h-1zM341 667h1v1h-1zM343 342h1v1h-1zM345 342h1v1h-1zM347 342h1v1h-1zM349 342h1v1h-1zM351 342h1v1h-1zM353 342h1v1h-1zM355 342h1v1h-1zM357 342h1v1h-1zM359 342h1v1h-1zM361 17h1v1h-1zM361 19h1v1h-1zM361 82h1v1h-1zM361 147h1v1h-1zM361 212h1v1h-1zM361 277h1v1h-1zM361 339h1v1h-1zM361 341h1v1h-1zM361 342h1v1h-1zM361 343h1v1h-1zM361 345h1v1h-1zM361 407h1v1h-1zM361 472h1v1h-1zM361 537h1v1h-1zM361 602h1v1h-1zM361 665h1v1h-1zM361 667h1v1h-1zM363 342h1v1h-1zM365 342h1v1h-1zM367 342h1v1h-1zM369 342h1v1h-1zM371 342h1v1h-1zM373 342h1v1h-1zM375 342h1v1h-1zM377 342h1v1h-1zM379 342h1v1h-1zM381 17h1v1h-1zM381 19h1v1h-1zM381 82h1v1h-1zM381 147h1v1h-1zM381 212h1v1h-1zM381 277h1v1h-1zM381 339h1v1h-1zM381 341h1v1h-1zM381 342h1v1h-1zM381 343h1v1h-1zM381 345h1v1h-1zM381 407h1v1h-1zM381 472h1v1h-1zM381 537h1v1h-1zM381 602h1v1h-1zM381 665h1v1h-1zM381 667h1v1h-1zM383 342h1v1h-1zM385 342h1v1h-1zM387 342h1v1h-1zM389 342h1v1h-1zM391 342h1v1h-1zM393 342h1v1h-1zM395 342h1v1h-1zM397 342h1v1h-1zM399 342h1v1h-1zM401 17h1v1h-1zM401 19h1v1h-1zM401 82h1v1h-1zM401 147h1v1h-1zM401 212h1v1h-1zM401 277h1v1h-1zM401 339h1v1h-1zM401 341h1v1h-1zM401 342h1v1h-1zM401 343h1v1h-1zM401 345h1v1h-1zM401 407h1v1h-1zM401 472h1v1h-1zM401 537h1v1h-1zM401 602h1v1h-1zM401 665h1v1h-1zM401 667h1v1h-1zM403 342h1v1h-1zM405 342h1v1h-1zM407 342h1v1h-1zM409 342h1v1h-1zM411 342h1v1h-1zM413 342h1v1h-1zM415 342h1v1h-1zM417 342h1v1h-1zM419 342h1v1h-1zM421 17h1v1h-1zM421 18h1v1h-1zM421 20h1v1h-1zM421 22h1v1h-1zM421 30h1v1h-1zM421 43h1v1h-1zM421 56h1v1h-1zM421 69h1v1h-1zM421 82h1v1h-1zM421 95h1v1h-1zM421 108h1v1h-1zM421 121h1v1h-1zM421 134h1v1h-1zM421 147h1v1h-1zM421 160h1v1h-1zM421 173h1v1h-1zM421 186h1v1h-1zM421 199h1v1h-1zM421 212h1v1h-1zM421 225h1v1h-1zM421 238h1v1h-1zM421 251h1v1h-1zM421 264h1v1h-1zM421 277h1v1h-1zM421 290h1v1h-1zM421 303h1v1h-1zM421 316h1v1h-1zM421 329h1v1h-1zM421 337h1v1h-1zM421 339h1v1h-1zM421 341h1v1h-1zM421 342h1v1h-1zM421 343h1v1h-1zM421 345h1v1h-1zM421 347h1v1h-1zM421 355h1v1h-1zM421 368h1v1h-1zM421 381h1v1h-1zM421 394h1v1h-1zM421 407h1v1h-1zM421 420h1v1h-1zM421 433h1v1h-1zM421 446h1v1h-1zM421 459h1v1h-1zM421 472h1v1h-1zM421 485h1v1h-1zM421 498h1v1h-1zM421 511h1v1h-1zM421 524h1v1h-1zM421 537h1v1h-1zM421 550h1v1h-1zM421 563h1v1h-1zM421 576h1v1h-1zM421 589h1v1h-1zM421 602h1v1h-1zM421 615h1v1h-1zM421 628h1v1h-1zM421 641h1v1h-1zM421 654h1v1h-1zM421 662h1v1h-1zM421 664h1v1h-1zM421 666h1v1h-1zM421 667h1v1h-1zM423 342h1v1h-1zM425 342h1v1h-1zM427 342h1v1h-1zM429 342h1v1h-1zM431 342h1v1h-1zM433 342h1v1h-1zM435 342h1v1h-1zM437 342h1v1h-1zM439 342h1v1h-1zM441 17h1v1h-1zM441 19h1v1h-1zM441 82h1v1h-1zM441 147h1v1h-1zM441 212h1v1h-1zM441 277h1v1h-1zM441 339h1v1h-1zM441 341h1v1h-1zM441 342h1v1h-1zM441 343h1v1h-1zM441 345h1v1h-1zM441 407h1v1h-1zM441 472h1v1h-1zM441 537h1v1h-1zM441 602h1v1h-1zM441 665h1v1h-1zM441 667h1v1h-1zM443 342h1v1h-1zM445 342h1v1h-1zM447 342h1v1h-1zM449 342h1v1h-1zM451 342h1v1h-1zM453 342h1v1h-1zM455 342h1v1h-1zM457 342h1v1h-1zM459 342h1v1h-1zM461 17h1v1h-1zM461 19h1v1h-1zM461 82h1v1h-1zM461 147h1v1h-1zM461 212h1v1h-1zM461 277h1v1h-1zM461 339h1v1h-1zM461 341h1v1h-1zM461 342h1v1h-1zM461 343h1v1h-1zM461 345h1v1h-1zM461 407h1v1h-1zM461 472h1v1h-1zM461 537h1v1h-1zM461 602h1v1h-1zM461 665h1v1h-1zM461 667h1v1h-1zM463 342h1v1h-1zM465 342h1v1h-1zM467 342h1v1h-1zM469 342h1v1h-1zM471 342h1v1h-1zM473 342h1v1h-1zM475 342h1v1h-1zM477 342h1v1h-1zM479 342h1v1h-1zM481 17h1v1h-1zM481 19h1v1h-1zM481 82h1v1h-1zM481 147h1v1h-1zM481 212h1v1h-1zM481 277h1v1h-1zM481 339h1v1h-1zM481 341h1v1h-1zM481 342h1v1h-1zM481 343h1v1h-1zM481 345h1v1h-1zM481 407h1v1h-1zM481 472h1v1h-1zM481 537h1v1h-1zM481 602h1v1h-1zM481 665h1v1h-1zM481 667h1v1h-1zM483 342h1v1h-1zM485 342h1v1h-1zM487 342h1v1h-1zM489 342h1v1h-1zM491 342h1v1h-1zM493 342h1v1h-1zM495 342h1v1h-1zM497 342h1v1h-1zM499 342h1v1h-1zM501 17h1v1h-1zM501 19h1v1h-1zM501 82h1v1h-1zM501 147h1v1h-1zM501 212h1v1h-1zM501 277h1v1h-1zM501 339h1v1h-1zM501 341h1v1h-1zM501 342h1v1h-1zM501 343h1v1h-1zM501 345h1v1h-1zM501 407h1v1h-1zM501 472h1v1h-1zM501 537h1v1h-1zM501 602h1v1h-1zM501 665h1v1h-1zM501 667h1v1h-1zM503 342h1v1h-1zM505 342h1v1h-1zM507 342h1v1h-1zM509 342h1v1h-1zM511 342h1v1h-1zM513 342h1v1h-1zM515 342h1v1h-1zM516 17h1v1h-1zM516 82h1v1h-1zM516 147h1v1h-1zM516 212h1v1h-1zM516 277h1v1h-1zM516 407h1v1h-1zM516 472h1v1h-1zM516 537h1v1h-1zM516 602h1v1h-1zM516 667h1v1h-1zM517 342h1v1h-1zM518 17h1v1h-1zM518 30h1v1h-1zM518 43h1v1h-1zM518 56h1v1h-1zM518 69h1v1h-1zM518 82h1v1h-1zM518 95h1v1h-1zM518 108h1v1h-1zM518 121h1v1h-1zM518 134h1v1h-1zM518 147h1v1h-1zM518 160h1v1h-1zM518 173h1v1h-1zM518 186h1v1h-1zM518 199h1v1h-1zM518 212h1v1h-1zM518 225h1v1h-1zM518 238h1v1h-1zM518 251h1v1h-1zM518 264h1v1h-1zM518 277h1v1h-1zM518 290h1v1h-1zM518 303h1v1h-1zM518 316h1v1h-1zM518 329h1v1h-1zM518 355h1v1h-1zM518 368h1v1h-1zM518 381h1v1h-1zM518 394h1v1h-1zM518 407h1v1h-1zM518 420h1v1h-1zM518 433h1v1h-1zM518 446h1v1h-1zM518 459h1v1h-1zM518 472h1v1h-1zM518 485h1v1h-1zM518 498h1v1h-1zM518 511h1v1h-1zM518 524h1v1h-1zM518 537h1v1h-1zM518 550h1v1h-1zM518 563h1v1h-1zM518 576h1v1h-1zM518 589h1v1h-1zM518 602h1v1h-1zM518 615h1v1h-1zM518 628h1v1h-1zM518 641h1v1h-1zM518 654h1v1h-1zM518 667h1v1h-1zM519 342h1v1h-1zM520 17h1v1h-1zM520 30h1v1h-1zM520 43h1v1h-1zM520 56h1v1h-1zM520 69h1v1h-1zM520 82h1v1h-1zM520 95h1v1h-1zM520 108h1v1h-1zM520 121h1v1h-1zM520 134h1v1h-1zM520 147h1v1h-1zM520 160h1v1h-1zM520 173h1v1h-1zM520 186h1v1h-1zM520 199h1v1h-1zM520 212h1v1h-1zM520 225h1v1h-1zM520 238h1v1h-1zM520 251h1v1h-1zM520 264h1v1h-1zM520 277h1v1h-1zM520 290h1v1h-1zM520 303h1v1h-1zM520 316h1v1h-1zM520 329h1v1h-1zM520 355h1v1h-1zM520 368h1v1h-1zM520 381h1v1h-1zM520 394h1v1h-1zM520 407h1v1h-1zM520 420h1v1h-1zM520 433h1v1h-1zM520 446h1v1h-1zM520 459h1v1h-1zM520 472h1v1h-1zM520 485h1v1h-1zM520 498h1v1h-1zM520 511h1v1h-1zM520 524h1v1h-1zM520 537h1v1h-1zM520 550h1v1h-1zM520 563h1v1h-1zM520 576h1v1h-1zM520 589h1v1h-1zM520 602h1v1h-1zM520 615h1v1h-1zM520 628h1v1h-1zM520 641h1v1h-1zM520 654h1v1h-1zM520 667h1v1h-1zM521 17h1v1h-1zM521 18h1v1h-1zM521 19h1v1h-1zM521 21h1v1h-1zM521 23h1v1h-1zM521 25h1v1h-1zM521 27h1v1h-1zM521 29h1v1h-1zM521 30h1v1h-1zM521 31h1v1h-1zM521 33h1v1h-1zM521 35h1v1h-1zM521 37h1v1h-1zM521 39h1v1h-1zM521 41h1v1h-1zM521 42h1v1h-1zM521 43h1v1h-1zM521 44h1v1h-1zM521 45h1v1h-1zM521 47h1v1h-1zM521 49h1v1h-1zM521 51h1v1h-1zM521 53h1v1h-1zM521 55h1v1h-1zM521 56h1v1h-1zM521 57h1v1h-1zM521 59h1v1h-1zM521 61h1v1h-1zM521 63h1v1h-1zM521 65h1v1h-1zM521 67h1v1h-1zM521 68h1v1h-1zM521 69h1v1h-1zM521 70h1v1h-1zM521 71h1v1h-1zM521 73h1v1h-1zM521 75h1v1h-1zM521 77h1v1h-1zM521 79h1v1h-1zM521 81h1v1h-1zM521 82h1v1h-1zM521 83h1v1h-1zM521 85h1v1h-1zM521 87h1v1h-1zM521 89h1v1h-1zM521 91h1v1h-1zM521 93h1v1h-1zM521 94h1v1h-1zM521 95h1v1h-1zM521 96h1v1h-1zM521 97h1v1h-1zM521 99h1v1h-1zM521 101h1v1h-1zM521 103h1v1h-1zM521 105h1v1h-1zM521 107h1v1h-1zM521 108h1v1h-1zM521 109h1v1h-1zM521 111h1v1h-1zM521 113h1v1h-1zM521 115h1v1h-1zM521 117h1v1h-1zM521 119h1v1h-1zM521 120h1v1h-1zM521 121h1v1h-1zM521 122h1v1h-1zM521 123h1v1h-1zM521 125h1v1h-1zM521 127h1v1h-1zM521 129h1v1h-1zM521 131h1v1h-1zM521 133h1v1h-1zM521 134h1v1h-1zM521 135h1v1h-1zM521 137h1v1h-1zM521 139h1v1h-1zM521 141h1v1h-1zM521 143h1v1h-1zM521 145h1v1h-1zM521 146h1v1h-1zM521 147h1v1h-1zM521 148h1v1h-1zM521 149h1v1h-1zM521 151h1v1h-1zM521 153h1v1h-1zM521 155h1v1h-1zM521 157h1v1h-1zM521 159h1v1h-1zM521 160h1v1h-1zM521 161h1v1h-1zM521 163h1v1h-1zM521 165h1v1h-1zM521 167h1v1h-1zM521 169h1v1h-1zM521 171h1v1h-1zM521 172h1v1h-1zM521 173h1v1h-1zM521 174h1v1h-1zM521 175h1v1h-1zM521 177h1v1h-1zM521 179h1v1h-1zM521 181h1v1h-1zM521 183h1v1h-1zM521 185h1v1h-1zM521 186h1v1h-1zM521 187h1v1h-1zM521 189h1v1h-1zM521 191h1v1h-1zM521 193h1v1h-1zM521 195h1v1h-1zM521 197h1v1h-1zM521 198h1v1h-1zM521 199h1v1h-1zM521 200h1v1h-1zM521 201h1v1h-1zM521 203h1v1h-1zM521 205h1v1h-1zM521 207h1v1h-1zM521 209h1v1h-1zM521 211h1v1h-1zM521 212h1v1h-1zM521 213h1v1h-1zM521 215h1v1h-1zM521 217h1v1h-1zM521 219h1v1h-1zM521 221h1v1h-1zM521 223h1v1h-1zM521 224h1v1h-1zM521 225h1v1h-1zM521 226h1v1h-1zM521 227h1v1h-1zM521 229h1v1h-1zM521 231h1v1h-1zM521 233h1v1h-1zM521 235h1v1h-1zM521 237h1v1h-1zM521 238h1v1h-1zM521 239h1v1h-1zM521 241h1v1h-1zM521 243h1v1h-1zM521 245h1v1h-1zM521 247h1v1h-1zM521 249h1v1h-1zM521 250h1v1h-1zM521 251h1v1h-1zM521 252h1v1h-1zM521 253h1v1h-1zM521 255h1v1h-1zM521 257h1v1h-1zM521 259h1v1h-1zM521 261h1v1h-1zM521 263h1v1h-1zM521 264h1v1h-1zM521 265h1v1h-1zM521 267h1v1h-1zM521 269h1v1h-1zM521 271h1v1h-1zM521 273h1v1h-1zM521 275h1v1h-1zM521 276h1v1h-1zM521 277h1v1h-1zM521 278h1v1h-1zM521 279h1v1h-1zM521 281h1v1h-1zM521 283h1v1h-1zM521 285h1v1h-1zM521 287h1v1h-1zM521 289h1v1h-1zM521 290h1v1h-1zM521 291h1v1h-1zM521 293h1v1h-1zM521 295h1v1h-1zM521 297h1v1h-1zM521 299h1v1h-1zM521 301h1v1h-1zM521 302h1v1h-1zM521 303h1v1h-1zM521 304h1v1h-1zM521 305h1v1h-1zM521 307h1v1h-1zM521 309h1v1h-1zM521 311h1v1h-1zM521 313h1v1h-1zM521 315h1v1h-1zM521 316h1v1h-1zM521 317h1v1h-1zM521 319h1v1h-1zM521 321h1v1h-1zM521 323h1v1h-1zM521 325h1v1h-1zM521 327h1v1h-1zM521 328h1v1h-1zM521 329h1v1h-1zM521 330h1v1h-1zM521 331h1v1h-1zM521 333h1v1h-1zM521 335h1v1h-1zM521 337h1v1h-1zM521 339h1v1h-1zM521 341h1v1h-1zM521 342h1v1h-1zM521 343h1v1h-1zM521 345h1v1h-1zM521 347h1v1h-1zM521 349h1v1h-1zM521 351h1v1h-1zM521 353h1v1h-1zM521 354h1v1h-1zM521 355h1v1h-1zM521 356h1v1h-1zM521 357h1v1h-1zM521 359h1v1h-1zM521 361h1v1h-1zM521 363h1v1h-1zM521 365h1v1h-1zM521 367h1v1h-1zM521 368h1v1h-1zM521 369h1v1h-1zM521 371h1v1h-1zM521 373h1v1h-1zM521 375h1v1h-1zM521 377h1v1h-1zM521 379h1v1h-1zM521 380h1v1h-1zM521 381h1v1h-1zM521 382h1v1h-1zM521 383h1v1h-1zM521 385h1v1h-1zM521 387h1v1h-1zM521 389h1v1h-1zM521 391h1v1h-1zM521 393h1v1h-1zM521 394h1v1h-1zM521 395h1v1h-1zM521 397h1v1h-1zM521 399h1v1h-1zM521 401h1v1h-1zM521 403h1v1h-1zM521 405h1v1h-1zM521 406h1v1h-1zM521 407h1v1h-1zM521 408h1v1h-1zM521 409h1v1h-1zM521 411h1v1h-1zM521 413h1v1h-1zM521 415h1v1h-1zM521 417h1v1h-1zM521 419h1v1h-1zM521 420h1v1h-1zM521 421h1v1h-1zM521 423h1v1h-1zM521 425h1v1h-1zM521 427h1v1h-1zM521 429h1v1h-1zM521 431h1v1h-1zM521 432h1v1h-1zM521 433h1v1h-1zM521 434h1v1h-1zM521 435h1v1h-1zM521 437h1v1h-1zM521 439h1v1h-1zM521 441h1v1h-1zM521 443h1v1h-1zM521 445h1v1h-1zM521 446h1v1h-1zM521 447h1v1h-1zM521 449h1v1h-1zM521 451h1v1h-1zM521 453h1v1h-1zM521 455h1v1h-1zM521 457h1v1h-1zM521 458h1v1h-1zM521 459h1v1h-1zM521 460h1v1h-1zM521 461h1v1h-1zM521 463h1v1h-1zM521 465h1v1h-1zM521 467h1v1h-1zM521 469h1v1h-1zM521 471h1v1h-1zM521 472h1v1h-1zM521 473h1v1h-1zM521 475h1v1h-1zM521 477h1v1h-1zM521 479h1v1h-1zM521 481h1v1h-1zM521 483h1v1h-1zM521 484h1v1h-1zM521 485h1v1h-1zM521 486h1v1h-1zM521 487h1v1h-1zM521 489h1v1h-1zM521 491h1v1h-1zM521 493h1v1h-1zM521 495h1v1h-1zM521 497h1v1h-1zM521 498h1v1h-1zM521 499h1v1h-1zM521 501h1v1h-1zM521 503h1v1h-1zM521 505h1v1h-1zM521 507h1v1h-1zM521 509h1v1h-1zM521 510h1v1h-1zM521 511h1v1h-1zM521 512h1v1h-1zM521 513h1v1h-1zM521 515h1v1h-1zM521 517h1v1h-1zM521 519h1v1h-1zM521 521h1v1h-1zM521 523h1v1h-1zM521 524h1v1h-1zM521 525h1v1h-1zM521 527h1v1h-1zM521 529h1v1h-1zM521 531h1v1h-1zM521 533h1v1h-1zM521 535h1v1h-1zM521 536h1v1h-1zM521 537h1v1h-1zM521 538h1v1h-1zM521 539h1v1h-1zM521 541h1v1h-1zM521 543h1v1h-1zM521 545h1v1h-1zM521 547h1v1h-1zM521 549h1v1h-1zM521 550h1v1h-1zM521 551h1v1h-1zM521 553h1v1h-1zM521 555h1v1h-1zM521 557h1v1h-1zM521 559h1v1h-1zM521 561h1v1h-1zM521 562h1v1h-1zM521 563h1v1h-1zM521 564h1v1h-1zM521 565h1v1h-1zM521 567h1v1h-1zM521 569h1v1h-1zM521 571h1v1h-1zM521 573h1v1h-1zM521 575h1v1h-1zM521 576h1v1h-1zM521 577h1v1h-1zM521 579h1v1h-1zM521 581h1v1h-1zM521 583h1v1h-1zM521 585h1v1h-1zM521 587h1v1h-1zM521 588h1v1h-1zM521 589h1v1h-1zM521 590h1v1h-1zM521 591h1v1h-1zM521 593h1v1h-1zM521 595h1v1h-1zM521 597h1v1h-1zM521 599h1v1h-1zM521 601h1v1h-1zM521 602h1v1h-1zM521 603h1v1h-1zM521 605h1v1h-1zM521 607h1v1h-1zM521 609h1v1h-1zM521 611h1v1h-1zM521 613h1v1h-1zM521 614h1v1h-1zM521 615h1v1h-1zM521 616h1v1h-1zM521 617h1v1h-1zM521 619h1v1h-1zM521 621h1v1h-1zM521 623h1v1h-1zM521 625h1v1h-1zM521 627h1v1h-1zM521 628h1v1h-1zM521 629h1v1h-1zM521 631h1v1h-1zM521 633h1v1h-1zM521 635h1v1h-1zM521 637h1v1h-1zM521 639h1v1h-1zM521 640h1v1h-1zM521 641h1v1h-1zM521 642h1v1h-1zM521 643h1v1h-1zM521 645h1v1h-1zM521 647h1v1h-1zM521 649h1v1h-1zM521 651h1v1h-1zM521 653h1v1h-1zM521 654h1v1h-1zM521 655h1v1h-1zM521 657h1v1h-1zM521 659h1v1h-1zM521 661h1v1h-1zM521 663h1v1h-1zM521 665h1v1h-1zM521 666h1v1h-1zM521 667h1v1h-1zM522 17h1v1h-1zM522 30h1v1h-1zM522 43h1v1h-1zM522 56h1v1h-1zM522 69h1v1h-1zM522 82h1v1h-1zM522 95h1v1h-1zM522 108h1v1h-1zM522 121h1v1h-1zM522 134h1v1h-1zM522 147h1v1h-1zM522 160h1v1h-1zM522 173h1v1h-1zM522 186h1v1h-1zM522 199h1v1h-1zM522 212h1v1h-1zM522 225h1v1h-1zM522 238h1v1h-1zM522 251h1v1h-1zM522 264h1v1h-1zM522 277h1v1h-1zM522 290h1v1h-1zM522 303h1v1h-1zM522 316h1v1h-1zM522 329h1v1h-1zM522 355h1v1h-1zM522 368h1v1h-1zM522 381h1v1h-1zM522 394h1v1h-1zM522 407h1v1h-1zM522 420h1v1h-1zM522 433h1v1h-1zM522 446h1v1h-1zM522 459h1v1h-1zM522 472h1v1h-1zM522 485h1v1h-1zM522 498h1v1h-1zM522 511h1v1h-1zM522 524h1v1h-1zM522 537h1v1h-1zM522 550h1v1h-1zM522 563h1v1h-1zM522 576h1v1h-1zM522 589h1v1h-1zM522 602h1v1h-1zM522 615h1v1h-1zM522 628h1v1h-1zM522 641h1v1h-1zM522 654h1v1h-1zM522 667h1v1h-1zM523 342h1v1h-1zM524 17h1v1h-1zM524 30h1v1h-1zM524 43h1v1h-1zM524 56h1v1h-1zM524 69h1v1h-1zM524 82h1v1h-1zM524 95h1v1h-1zM524 108h1v1h-1zM524 121h1v1h-1zM524 134h1v1h-1zM524 147h1v1h-1zM524 160h1v1h-1zM524 173h1v1h-1zM524 186h1v1h-1zM524 199h1v1h-1zM524 212h1v1h-1zM524 225h1v1h-1zM524 238h1v1h-1zM524 251h1v1h-1zM524 264h1v1h-1zM524 277h1v1h-1zM524 290h1v1h-1zM524 303h1v1h-1zM524 316h1v1h-1zM524 329h1v1h-1zM524 355h1v1h-1zM524 368h1v1h-1zM524 381h1v1h-1zM524 394h1v1h-1zM524 407h1v1h-1zM524 420h1v1h-1zM524 433h1v1h-1zM524 446h1v1h-1zM524 459h1v1h-1zM524 472h1v1h-1zM524 485h1v1h-1zM524 498h1v1h-1zM524 511h1v1h-1zM524 524h1v1h-1zM524 537h1v1h-1zM524 550h1v1h-1zM524 563h1v1h-1zM524 576h1v1h-1zM524 589h1v1h-1zM524 602h1v1h-1zM524 615h1v1h-1zM524 628h1v1h-1zM524 641h1v1h-1zM524 654h1v1h-1zM524 667h1v1h-1zM525 342h1v1h-1zM526 17h1v1h-1zM526 82h1v1h-1zM526 147h1v1h-1zM526 212h1v1h-1zM526 277h1v1h-1zM526 407h1v1h-1zM526 472h1v1h-1zM526 537h1v1h-1zM526 602h1v1h-1zM526 667h1v1h-1zM527 342h1v1h-1zM529 342h1v1h-1zM531 342h1v1h-1zM533 342h1v1h-1zM535 342h1v1h-1zM537 342h1v1h-1zM539 342h1v1h-1zM541 17h1v1h-1zM541 19h1v1h-1zM541 82h1v1h-1zM541 147h1v1h-1zM541 212h1v1h-1zM541 277h1v1h-1zM541 339h1v1h-1zM541 341h1v1h-1zM541 342h1v1h-1zM541 343h1v1h-1zM541 345h1v1h-1zM541 407h1v1h-1zM541 472h1v1h-1zM541 537h1v1h-1zM541 602h1v1h-1zM541 665h1v1h-1zM541 667h1v1h-1zM543 342h1v1h-1zM545 342h1v1h-1zM547 342h1v1h-1zM549 342h1v1h-1zM551 342h1v1h-1zM553 342h1v1h-1zM555 342h1v1h-1zM557 342h1v1h-1zM559 342h1v1h-1zM561 17h1v1h-1zM561 19h1v1h-1zM561 82h1v1h-1zM561 147h1v1h-1zM561 212h1v1h-1zM561 277h1v1h-1zM561 339h1v1h-1zM561 341h1v1h-1zM561 342h1v1h-1zM561 343h1v1h-1zM561 345h1v1h-1zM561 407h1v1h-1zM561 472h1v1h-1zM561 537h1v1h-1zM561 602h1v1h-1zM561 665h1v1h-1zM561 667h1v1h-1zM563 342h1v1h-1zM565 342h1v1h-1zM567 342h1v1h-1zM569 342h1v1h-1zM571 342h1v1h-1zM573 342h1v1h-1zM575 342h1v1h-1zM577 342h1v1h-1zM579 342h1v1h-1zM581 17h1v1h-1zM581 19h1v1h-1zM581 82h1v1h-1zM581 147h1v1h-1zM581 212h1v1h-1zM581 277h1v1h-1zM581 339h1v1h-1zM581 341h1v1h-1zM581 342h1v1h-1zM581 343h1v1h-1zM581 345h1v1h-1zM581 407h1v1h-1zM581 472h1v1h-1zM581 537h1v1h-1zM581 602h1v1h-1zM581 665h1v1h-1zM581 667h1v1h-1zM583 342h1v1h-1zM585 342h1v1h-1zM587 342h1v1h-1zM589 342h1v1h-1zM591 342h1v1h-1zM593 342h1v1h-1zM595 342h1v1h-1zM597 342h1v1h-1zM599 342h1v1h-1zM601 17h1v1h-1zM601 19h1v1h-1zM601 82h1v1h-1zM601 147h1v1h-1zM601 212h1v1h-1zM601 277h1v1h-1zM601 339h1v1h-1zM601 341h1v1h-1zM601 342h1v1h-1zM601 343h1v1h-1zM601 345h1v1h-1zM601 407h1v1h-1zM601 472h1v1h-1zM601 537h1v1h-1zM601 602h1v1h-1zM601 665h1v1h-1zM601 667h1v1h-1zM603 342h1v1h-1zM605 342h1v1h-1zM607 342h1v1h-1zM609 342h1v1h-1zM611 342h1v1h-1zM613 342h1v1h-1zM615 342h1v1h-1zM617 342h1v1h-1zM619 342h1v1h-1zM621 17h1v1h-1zM621 18h1v1h-1zM621 20h1v1h-1zM621 22h1v1h-1zM621 30h1v1h-1zM621 43h1v1h-1zM621 56h1v1h-1zM621 69h1v1h-1zM621 82h1v1h-1zM621 95h1v1h-1zM621 108h1v1h-1zM621 121h1v1h-1zM621 134h1v1h-1zM621 147h1v1h-1zM621 160h1v1h-1zM621 173h1v1h-1zM621 186h1v1h-1zM621 199h1v1h-1zM621 212h1v1h-1zM621 225h1v1h-1zM621 238h1v1h-1zM621 251h1v1h-1zM621 264h1v1h-1zM621 277h1v1h-1zM621 290h1v1h-1zM621 303h1v1h-1zM621 316h1v1h-1zM621 329h1v1h-1zM621 337h1v1h-1zM621 339h1v1h-1zM621 341h1v1h-1zM621 342h1v1h-1zM621 343h1v1h-1zM621 345h1v1h-1zM621 347h1v1h-1zM621 355h1v1h-1zM621 368h1v1h-1zM621 381h1v1h-1zM621 394h1v1h-1zM621 407h1v1h-1zM621 420h1v1h-1zM621 433h1v1h-1zM621 446h1v1h-1zM621 459h1v1h-1zM621 472h1v1h-1zM621 485h1v1h-1zM621 498h1v1h-1zM621 511h1v1h-1zM621 524h1v1h-1zM621 537h1v1h-1zM621 550h1v1h-1zM621 563h1v1h-1zM621 576h1v1h-1zM621 589h1v1h-1zM621 602h1v1h-1zM621 615h1v1h-1zM621 628h1v1h-1zM621 641h1v1h-1zM621 654h1v1h-1zM621 662h1v1h-1zM621 664h1v1h-1zM621 666h1v1h-1zM621 667h1v1h-1zM623 342h1v1h-1zM625 342h1v1h-1zM627 342h1v1h-1zM629 342h1v1h-1zM631 342h1v1h-1zM633 342h1v1h-1zM635 342h1v1h-1zM637 342h1v1h-1zM639 342h1v1h-1zM641 17h1v1h-1zM641 19h1v1h-1zM641 82h1v1h-1zM641 147h1v1h-1zM641 212h1v1h-1zM641 277h1v1h-1zM641 339h1v1h-1zM641 341h1v1h-1zM641 342h1v1h-1zM641 343h1v1h-1zM641 345h1v1h-1zM641 407h1v1h-1zM641 472h1v1h-1zM641 537h1v1h-1zM641 602h1v1h-1zM641 665h1v1h-1zM641 667h1v1h-1zM643 342h1v1h-1zM645 342h1v1h-1zM647 342h1v1h-1zM649 342h1v1h-1zM651 342h1v1h-1zM653 342h1v1h-1zM655 342h1v1h-1zM657 342h1v1h-1zM659 342h1v1h-1zM661 17h1v1h-1zM661 19h1v1h-1zM661 82h1v1h-1zM661 147h1v1h-1zM661 212h1v1h-1zM661 277h1v1h-1zM661 339h1v1h-1zM661 341h1v1h-1zM661 342h1v1h-1zM661 343h1v1h-1zM661 345h1v1h-1zM661 407h1v1h-1zM661 472h1v1h-1zM661 537h1v1h-1zM661 602h1v1h-1zM661 665h1v1h-1zM661 667h1v1h-1zM663 342h1v1h-1zM665 342h1v1h-1zM667 342h1v1h-1zM669 342h1v1h-1zM671 342h1v1h-1zM673 342h1v1h-1zM675 342h1v1h-1zM677 342h1v1h-1zM679 342h1v1h-1zM681 17h1v1h-1zM681 19h1v1h-1zM681 82h1v1h-1zM681 147h1v1h-1zM681 212h1v1h-1zM681 277h1v1h-1zM681 339h1v1h-1zM681 341h1v1h-1zM681 342h1v1h-1zM681 343h1v1h-1zM681 345h1v1h-1zM681 407h1v1h-1zM681 472h1v1h-1zM681 537h1v1h-1zM681 602h1v1h-1zM681 665h1v1h-1zM681 667h1v1h-1zM683 342h1v1h-1zM685 342h1v1h-1zM687 342h1v1h-1zM689 342h1v1h-1zM691 342h1v1h-1zM693 342h1v1h-1zM695 342h1v1h-1zM697 342h1v1h-1zM699 342h1v1h-1zM701 17h1v1h-1zM701 19h1v1h-1zM701 82h1v1h-1zM701 147h1v1h-1zM701 212h1v1h-1zM701 277h1v1h-1zM701 339h1v1h-1zM701 341h1v1h-1zM701 342h1v1h-1zM701 343h1v1h-1zM701 345h1v1h-1zM701 407h1v1h-1zM701 472h1v1h-1zM701 537h1v1h-1zM701 602h1v1h-1zM701 665h1v1h-1zM701 667h1v1h-1zM703 342h1v1h-1zM705 342h1v1h-1zM707 342h1v1h-1zM709 342h1v1h-1zM711 342h1v1h-1zM713 342h1v1h-1zM715 342h1v1h-1zM717 342h1v1h-1zM719 342h1v1h-1zM721 17h1v1h-1zM721 18h1v1h-1zM721 20h1v1h-1zM721 22h1v1h-1zM721 30h1v1h-1zM721 43h1v1h-1zM721 56h1v1h-1zM721 69h1v1h-1zM721 82h1v1h-1zM721 95h1v1h-1zM721 108h1v1h-1zM721 121h1v1h-1zM721 134h1v1h-1zM721 147h1v1h-1zM721 160h1v1h-1zM721 173h1v1h-1zM721 186h1v1h-1zM721 199h1v1h-1zM721 212h1v1h-1zM721 225h1v1h-1zM721 238h1v1h-1zM721 251h1v1h-1zM721 264h1v1h-1zM721 277h1v1h-1zM721 290h1v1h-1zM721 303h1v1h-1zM721 316h1v1h-1zM721 329h1v1h-1zM721 337h1v1h-1zM721 339h1v1h-1zM721 341h1v1h-1zM721 342h1v1h-1zM721 343h1v1h-1zM721 345h1v1h-1zM721 347h1v1h-1zM721 355h1v1h-1zM721 368h1v1h-1zM721 381h1v1h-1zM721 394h1v1h-1zM721 407h1v1h-1zM721 420h1v1h-1zM721 433h1v1h-1zM721 446h1v1h-1zM721 459h1v1h-1zM721 472h1v1h-1zM721 485h1v1h-1zM721 498h1v1h-1zM721 511h1v1h-1zM721 524h1v1h-1zM721 537h1v1h-1zM721 550h1v1h-1zM721 563h1v1h-1zM721 576h1v1h-1zM721 589h1v1h-1zM721 602h1v1h-1zM721 615h1v1h-1zM721 628h1v1h-1zM721 641h1v1h-1zM721 654h1v1h-1zM721 662h1v1h-1zM721 664h1v1h-1zM721 666h1v1h-1zM721 667h1v1h-1zM723 342h1v1h-1zM725 342h1v1h-1zM727 342h1v1h-1zM729 342h1v1h-1zM731 342h1v1h-1zM733 342h1v1h-1zM735 342h1v1h-1zM737 342h1v1h-1zM739 342h1v1h-1zM741 17h1v1h-1zM741 19h1v1h-1zM741 82h1v1h-1zM741 147h1v1h-1zM741 212h1v1h-1zM741 277h1v1h-1zM741 339h1v1h-1zM741 341h1v1h-1zM741 342h1v1h-1zM741 343h1v1h-1zM741 345h1v1h-1zM741 407h1v1h-1zM741 472h1v1h-1zM741 537h1v1h-1zM741 602h1v1h-1zM741 665h1v1h-1zM741 667h1v1h-1zM743 342h1v1h-1zM745 342h1v1h-1zM747 342h1v1h-1zM749 342h1v1h-1zM751 342h1v1h-1zM753 342h1v1h-1zM755 342h1v1h-1zM757 342h1v1h-1zM759 342h1v1h-1zM761 17h1v1h-1zM761 19h1v1h-1zM761 82h1v1h-1zM761 147h1v1h-1zM761 212h1v1h-1zM761 277h1v1h-1zM761 339h1v1h-1zM761 341h1v1h-1zM761 342h1v1h-1zM761 343h1v1h-1zM761 345h1v1h-1zM761 407h1v1h-1zM761 472h1v1h-1zM761 537h1v1h-1zM761 602h1v1h-1zM761 665h1v1h-1zM761 667h1v1h-1zM763 342h1v1h-1zM765 342h1v1h-1zM767 342h1v1h-1zM769 342h1v1h-1zM771 342h1v1h-1zM773 342h1v1h-1zM775 342h1v1h-1zM777 342h1v1h-1zM779 342h1v1h-1zM781 17h1v1h-1zM781 19h1v1h-1zM781 82h1v1h-1zM781 147h1v1h-1zM781 212h1v1h-1zM781 277h1v1h-1zM781 339h1v1h-1zM781 341h1v1h-1zM781 342h1v1h-1zM781 343h1v1h-1zM781 345h1v1h-1zM781 407h1v1h-1zM781 472h1v1h-1zM781 537h1v1h-1zM781 602h1v1h-1zM781 665h1v1h-1zM781 667h1v1h-1zM783 342h1v1h-1zM785 342h1v1h-1zM787 342h1v1h-1zM789 342h1v1h-1zM791 342h1v1h-1zM793 342h1v1h-1zM795 342h1v1h-1zM797 342h1v1h-1zM799 342h1v1h-1zM801 17h1v1h-1zM801 19h1v1h-1zM801 82h1v1h-1zM801 147h1v1h-1zM801 212h1v1h-1zM801 277h1v1h-1zM801 339h1v1h-1zM801 341h1v1h-1zM801 342h1v1h-1zM801 343h1v1h-1zM801 345h1v1h-1zM801 407h1v1h-1zM801 472h1v1h-1zM801 537h1v1h-1zM801 602h1v1h-1zM801 665h1v1h-1zM801 667h1v1h-1zM803 342h1v1h-1zM805 342h1v1h-1zM807 342h1v1h-1zM809 342h1v1h-1zM811 342h1v1h-1zM813 342h1v1h-1zM815 342h1v1h-1zM817 342h1v1h-1zM819 342h1v1h-1zM821 17h1v1h-1zM821 18h1v1h-1zM821 20h1v1h-1zM821 22h1v1h-1zM821 30h1v1h-1zM821 43h1v1h-1zM821 56h1v1h-1zM821 69h1v1h-1zM821 82h1v1h-1zM821 95h1v1h-1zM821 108h1v1h-1zM821 121h1v1h-1zM821 134h1v1h-1zM821 147h1v1h-1zM821 160h1v1h-1zM821 173h1v1h-1zM821 186h1v1h-1zM821 199h1v1h-1zM821 212h1v1h-1zM821 225h1v1h-1zM821 238h1v1h-1zM821 251h1v1h-1zM821 264h1v1h-1zM821 277h1v1h-1zM821 290h1v1h-1zM821 303h1v1h-1zM821 316h1v1h-1zM821 329h1v1h-1zM821 337h1v1h-1zM821 339h1v1h-1zM821 341h1v1h-1zM821 342h1v1h-1zM821 343h1v1h-1zM821 345h1v1h-1zM821 347h1v1h-1zM821 355h1v1h-1zM821 368h1v1h-1zM821 381h1v1h-1zM821 394h1v1h-1zM821 407h1v1h-1zM821 420h1v1h-1zM821 433h1v1h-1zM821 446h1v1h-1zM821 459h1v1h-1zM821 472h1v1h-1zM821 485h1v1h-1zM821 498h1v1h-1zM821 511h1v1h-1zM821 524h1v1h-1zM821 537h1v1h-1zM821 550h1v1h-1zM821 563h1v1h-1zM821 576h1v1h-1zM821 589h1v1h-1zM821 602h1v1h-1zM821 615h1v1h-1zM821 628h1v1h-1zM821 641h1v1h-1zM821 654h1v1h-1zM821 662h1v1h-1zM821 664h1v1h-1zM821 666h1v1h-1zM821 667h1v1h-1zM823 342h1v1h-1zM825 342h1v1h-1zM827 342h1v1h-1zM829 342h1v1h-1zM831 342h1v1h-1zM833 342h1v1h-1zM835 342h1v1h-1zM837 342h1v1h-1zM839 342h1v1h-1zM841 17h1v1h-1zM841 19h1v1h-1zM841 82h1v1h-1zM841 147h1v1h-1zM841 212h1v1h-1zM841 277h1v1h-1zM841 339h1v1h-1zM841 341h1v1h-1zM841 342h1v1h-1zM841 343h1v1h-1zM841 345h1v1h-1zM841 407h1v1h-1zM841 472h1v1h-1zM841 537h1v1h-1zM841 602h1v1h-1zM841 665h1v1h-1zM841 667h1v1h-1zM843 342h1v1h-1zM845 342h1v1h-1zM847 342h1v1h-1zM849 342h1v1h-1zM851 342h1v1h-1zM853 342h1v1h-1zM855 342h1v1h-1zM857 342h1v1h-1zM859 342h1v1h-1zM861 17h1v1h-1zM861 19h1v1h-1zM861 82h1v1h-1zM861 147h1v1h-1zM861 212h1v1h-1zM861 277h1v1h-1zM861 339h1v1h-1zM861 341h1v1h-1zM861 342h1v1h-1zM861 343h1v1h-1zM861 345h1v1h-1zM861 407h1v1h-1zM861 472h1v1h-1zM861 537h1v1h-1zM861 602h1v1h-1zM861 665h1v1h-1zM861 667h1v1h-1zM863 342h1v1h-1zM865 342h1v1h-1zM867 342h1v1h-1zM869 342h1v1h-1zM871 342h1v1h-1zM873 342h1v1h-1zM875 342h1v1h-1zM877 342h1v1h-1zM879 342h1v1h-1zM881 17h1v1h-1zM881 19h1v1h-1zM881 82h1v1h-1zM881 147h1v1h-1zM881 212h1v1h-1zM881 277h1v1h-1zM881 339h1v1h-1zM881 341h1v1h-1zM881 342h1v1h-1zM881 343h1v1h-1zM881 345h1v1h-1zM881 407h1v1h-1zM881 472h1v1h-1zM881 537h1v1h-1zM881 602h1v1h-1zM881 665h1v1h-1zM881 667h1v1h-1zM883 342h1v1h-1zM885 342h1v1h-1zM887 342h1v1h-1zM889 342h1v1h-1zM891 342h1v1h-1zM893 342h1v1h-1zM895 342h1v1h-1zM897 342h1v1h-1zM899 342h1v1h-1zM901 17h1v1h-1zM901 19h1v1h-1zM901 82h1v1h-1zM901 147h1v1h-1zM901 212h1v1h-1zM901 277h1v1h-1zM901 339h1v1h-1zM901 341h1v1h-1zM901 342h1v1h-1zM901 343h1v1h-1zM901 345h1v1h-1zM901 407h1v1h-1zM901 472h1v1h-1zM901 537h1v1h-1zM901 602h1v1h-1zM901 665h1v1h-1zM901 667h1v1h-1zM903 342h1v1h-1zM905 342h1v1h-1zM907 342h1v1h-1zM909 342h1v1h-1zM911 342h1v1h-1zM913 342h1v1h-1zM915 342h1v1h-1zM917 342h1v1h-1zM919 342h1v1h-1zM921 17h1v1h-1zM921 18h1v1h-1zM921 20h1v1h-1zM921 22h1v1h-1zM921 30h1v1h-1zM921 43h1v1h-1zM921 56h1v1h-1zM921 69h1v1h-1zM921 82h1v1h-1zM921 95h1v1h-1zM921 108h1v1h-1zM921 121h1v1h-1zM921 134h1v1h-1zM921 147h1v1h-1zM921 160h1v1h-1zM921 173h1v1h-1zM921 186h1v1h-1zM921 199h1v1h-1zM921 212h1v1h-1zM921 225h1v1h-1zM921 238h1v1h-1zM921 251h1v1h-1zM921 264h1v1h-1zM921 277h1v1h-1zM921 290h1v1h-1zM921 303h1v1h-1zM921 316h1v1h-1zM921 329h1v1h-1zM921 337h1v1h-1zM921 339h1v1h-1zM921 341h1v1h-1zM921 342h1v1h-1zM921 343h1v1h-1zM921 345h1v1h-1zM921 347h1v1h-1zM921 355h1v1h-1zM921 368h1v1h-1zM921 381h1v1h-1zM921 394h1v1h-1zM921 407h1v1h-1zM921 420h1v1h-1zM921 433h1v1h-1zM921 446h1v1h-1zM921 459h1v1h-1zM921 472h1v1h-1zM921 485h1v1h-1zM921 498h1v1h-1zM921 511h1v1h-1zM921 524h1v1h-1zM921 537h1v1h-1zM921 550h1v1h-1zM921 563h1v1h-1zM921 576h1v1h-1zM921 589h1v1h-1zM921 602h1v1h-1zM921 615h1v1h-1zM921 628h1v1h-1zM921 641h1v1h-1zM921 654h1v1h-1zM921 662h1v1h-1zM921 664h1v1h-1zM921 666h1v1h-1zM921 667h1v1h-1zM923 342h1v1h-1zM925 342h1v1h-1zM927 342h1v1h-1zM929 342h1v1h-1zM931 342h1v1h-1zM933 342h1v1h-1zM935 342h1v1h-1zM937 342h1v1h-1zM939 342h1v1h-1zM941 17h1v1h-1zM941 19h1v1h-1zM941 82h1v1h-1zM941 147h1v1h-1zM941 212h1v1h-1zM941 277h1v1h-1zM941 339h1v1h-1zM941 341h1v1h-1zM941 342h1v1h-1zM941 343h1v1h-1zM941 345h1v1h-1zM941 407h1v1h-1zM941 472h1v1h-1zM941 537h1v1h-1zM941 602h1v1h-1zM941 665h1v1h-1zM941 667h1v1h-1zM943 342h1v1h-1zM945 342h1v1h-1zM947 342h1v1h-1zM949 342h1v1h-1zM951 342h1v1h-1zM953 342h1v1h-1zM955 342h1v1h-1zM957 342h1v1h-1zM959 342h1v1h-1zM961 17h1v1h-1zM961 19h1v1h-1zM961 82h1v1h-1zM961 147h1v1h-1zM961 212h1v1h-1zM961 277h1v1h-1zM961 339h1v1h-1zM961 341h1v1h-1zM961 342h1v1h-1zM961 343h1v1h-1zM961 345h1v1h-1zM961 407h1v1h-1zM961 472h1v1h-1zM961 537h1v1h-1zM961 602h1v1h-1zM961 665h1v1h-1zM961 667h1v1h-1zM963 342h1v1h-1zM965 342h1v1h-1zM967 342h1v1h-1zM969 342h1v1h-1zM971 342h1v1h-1zM973 342h1v1h-1zM975 342h1v1h-1zM977 342h1v1h-1zM979 342h1v1h-1zM981 17h1v1h-1zM981 19h1v1h-1zM981 82h1v1h-1zM981 147h1v1h-1zM981 212h1v1h-1zM981 277h1v1h-1zM981 339h1v1h-1zM981 341h1v1h-1zM981 342h1v1h-1zM981 343h1v1h-1zM981 345h1v1h-1zM981 407h1v1h-1zM981 472h1v1h-1zM981 537h1v1h-1zM981 602h1v1h-1zM981 665h1v1h-1zM981 667h1v1h-1zM983 342h1v1h-1zM985 342h1v1h-1zM987 342h1v1h-1zM989 342h1v1h-1zM991 342h1v1h-1zM993 342h1v1h-1zM995 342h1v1h-1zM997 342h1v1h-1zM999 342h1v1h-1zM1001 17h1v1h-1zM1001 19h1v1h-1zM1001 82h1v1h-1zM1001 147h1v1h-1zM1001 212h1v1h-1zM1001 277h1v1h-1zM1001 339h1v1h-1zM1001 341h1v1h-1zM1001 342h1v1h-1zM1001 343h1v1h-1zM1001 345h1v1h-1zM1001 407h1v1h-1zM1001 472h1v1h-1zM1001 537h1v1h-1zM1001 602h1v1h-1zM1001 665h1v1h-1zM1001 667h1v1h-1zM1003 342h1v1h-1zM1005 342h1v1h-1zM1007 342h1v1h-1zM1009 342h1v1h-1zM1011 342h1v1h-1zM1013 342h1v1h-1zM1015 342h1v1h-1zM1017 342h1v1h-1zM1018 30h1v1h-1zM1018 43h1v1h-1zM1018 56h1v1h-1zM1018 69h1v1h-1zM1018 82h1v1h-1zM1018 95h1v1h-1zM1018 108h1v1h-1zM1018 121h1v1h-1zM1018 134h1v1h-1zM1018 147h1v1h-1zM1018 160h1v1h-1zM1018 173h1v1h-1zM1018 186h1v1h-1zM1018 199h1v1h-1zM1018 212h1v1h-1zM1018 225h1v1h-1zM1018 238h1v1h-1zM1018 251h1v1h-1zM1018 264h1v1h-1zM1018 277h1v1h-1zM1018 290h1v1h-1zM1018 303h1v1h-1zM1018 316h1v1h-1zM1018 329h1v1h-1zM1018 355h1v1h-1zM1018 368h1v1h-1zM1018 381h1v1h-1zM1018 394h1v1h-1zM1018 407h1v1h-1zM1018 420h1v1h-1zM1018 433h1v1h-1zM1018 446h1v1h-1zM1018 459h1v1h-1zM1018 472h1v1h-1zM1018 485h1v1h-1zM1018 498h1v1h-1zM1018 511h1v1h-1zM1018 524h1v1h-1zM1018 537h1v1h-1zM1018 550h1v1h-1zM1018 563h1v1h-1zM1018 576h1v1h-1zM1018 589h1v1h-1zM1018 602h1v1h-1zM1018 615h1v1h-1zM1018 628h1v1h-1zM1018 641h1v1h-1zM1018 654h1v1h-1zM1019 342h1v1h-1zM1020 30h1v1h-1zM1020 43h1v1h-1zM1020 56h1v1h-1zM1020 69h1v1h-1zM1020 82h1v1h-1zM1020 95h1v1h-1zM1020 108h1v1h-1zM1020 121h1v1h-1zM1020 134h1v1h-1zM1020 147h1v1h-1zM1020 160h1v1h-1zM1020 173h1v1h-1zM1020 186h1v1h-1zM1020 199h1v1h-1zM1020 212h1v1h-1zM1020 225h1v1h-1zM1020 238h1v1h-1zM1020 251h1v1h-1zM1020 264h1v1h-1zM1020 277h1v1h-1zM1020 290h1v1h-1zM1020 303h1v1h-1zM1020 316h1v1h-1zM1020 329h1v1h-1zM1020 355h1v1h-1zM1020 368h1v1h-1zM1020 381h1v1h-1zM1020 394h1v1h-1zM1020 407h1v1h-1zM1020 420h1v1h-1zM1020 433h1v1h-1zM1020 446h1v1h-1zM1020 459h1v1h-1zM1020 472h1v1h-1zM1020 485h1v1h-1zM1020 498h1v1h-1zM1020 511h1v1h-1zM1020 524h1v1h-1zM1020 537h1v1h-1zM1020 550h1v1h-1zM1020 563h1v1h-1zM1020 576h1v1h-1zM1020 589h1v1h-1zM1020 602h1v1h-1zM1020 615h1v1h-1zM1020 628h1v1h-1zM1020 641h1v1h-1zM1020 654h1v1h-1z" fill="#ececec"/>
</svg>

<div class="box" style="left:20px;top:670px;width:556px;height:21px"></div>
<div class="pill" style="left:26px;top:673px;background:#ffff00;color:#000">1</div>
<div class="pill" style="left:165px;top:673px;background:#00e4e4;color:#000">2</div>
<div class="pill" style="left:304px;top:673px;background:#a800b8;color:#000">3</div>
<div class="pill" style="left:443px;top:673px;background:#10a810;color:#000">4</div>
<div class="box" style="left:583px;top:670px;width:146px;height:38px"></div>
<div class="box" style="left:738px;top:670px;width:106px;height:38px"></div>
<div class="box" style="left:851px;top:670px;width:171px;height:39px"></div>
<div class="pill" style="left:882px;top:673px;background:#ffff00;color:#000">1</div>
<div class="btn" style="left:20px"></div>
<div class="btn" style="left:138px"></div>
<div class="btn" style="left:256px"></div>
<div class="btn" style="left:374px"></div>
<div class="btn" style="left:492px"></div>
<div class="btn" style="left:729px"></div>
<div class="hl" style="left:56px;width:42px"></div>
<div class="pill" style="left:183px;top:742px;background:#ffff00;color:#000">1</div>
<div class="hl" style="left:300px;width:26px"></div>
<div class="hl" style="left:521px;width:56px"></div>
<div class="hl" style="left:754px;width:62px;top:733px"></div>
<div class="box" style="left:909px;top:729px;width:113px;height:37px"></div>

<svg width="1024" height="768" viewBox="0 0 1024 768" style="position:absolute;left:0;top:0">
<g shape-rendering="crispEdges" fill="#5b96d0">
<rect x="121" y="0" width="800" height="1"/><rect x="121" y="15" width="800" height="1"/>
<rect x="121" y="0" width="1" height="16"/><rect x="920" y="0" width="1" height="16"/>
<rect x="282" y="7" width="478" height="1" fill="#00e0e0"/>
</g>
<g shape-rendering="crispEdges" fill="#fff">
<rect x="496" y="1" width="2" height="14"/><rect x="496" y="1" width="3" height="2"/><rect x="496" y="13" width="3" height="2"/>
<rect x="545" y="1" width="2" height="14"/><rect x="544" y="1" width="3" height="2"/><rect x="544" y="13" width="3" height="2"/>
</g>
<polygon points="517.5,1 525.5,1 521.5,5.5" fill="#ff9c00"/>
<polygon points="515.5,17 527.5,17 521.5,23.5" fill="#ff9c00"/>
<rect x="498" y="5" width="8" height="11" rx="2" fill="#ff9c00"/>
<g shape-rendering="crispEdges" fill="#000"><rect x="499" y="6" width="6" height="2"/><rect x="501" y="8" width="2" height="7"/></g>
<path d="M121 25 q0 -1 1 -1 h10 q1 0 1 1 v10 l-6 4 l-6 -4 z" fill="#ff9c00"/>
<g shape-rendering="crispEdges" fill="#000"><rect x="122" y="25" width="10" height="2"/><rect x="126" y="27" width="2" height="9"/></g>
<polygon points="1010,575.5 1016,570 1016,581" fill="#ffff00"/>
<rect x="1016" y="575" width="5" height="2" fill="#ffff00" shape-rendering="crispEdges"/>
<defs><linearGradient id="g2" x1="0" y1="0" x2="0" y2="1"><stop offset="0" stop-color="#20f0f0"/><stop offset="0.8" stop-color="#00e0e0"/><stop offset="1" stop-color="#008888"/></linearGradient></defs><polygon points="0,81 13,81 20,89 13,98 0,98" fill="url(#g2)"/>
<polygon points="0.8,133.8 12.6,133.8 19,141.3 12.6,148.7 0.8,148.7" fill="none" stroke="#ff5cff" stroke-width="1.6"/>
<polygon points="0.8,589.8 12.6,589.8 19,597.3 12.6,604.7 0.8,604.7" fill="none" stroke="#ffff00" stroke-width="1.6"/>
<polygon points="0.8,659.8 12.6,659.8 19,667.3 12.6,674.7 0.8,674.7" fill="none" stroke="#3cf03c" stroke-width="1.6"/>
<rect x="587.5" y="691.5" width="11" height="12" rx="2" fill="#ff9c00"/>
<g shape-rendering="crispEdges" fill="#000"><rect x="589" y="692" width="9" height="2"/><rect x="592" y="694" width="3" height="9"/></g>
<g fill="#ff9c00"><rect x="600" y="697" width="6" height="1" shape-rendering="crispEdges"/><polygon points="605,693.5 609.5,697.5 605,701.5"/>
<polygon points="610,694 621,694 615.5,700"/></g>
<rect x="377.5" y="735.5" width="31" height="31.5" rx="3" fill="#0a6cf5" stroke="#d0dcf4" stroke-width="1"/>
<g fill="none" stroke="#fff" stroke-width="1.2">
<polyline points="381,761.5 388.5,761.5 397.5,742.5 405,742.5"/>
<polyline points="419,742.5 426.5,742.5 435.5,761.5 443,761.5"/>
<polyline points="457,742.5 465,742.5 474,761.5 481,761.5"/>
<polyline points="457,761.5 465,761.5 474,742.5 481,742.5"/>
<polyline points="920,685.5 925,685.5 928,676 932,676" stroke-width="1.6"/>
</g>
<path d="M144.5 675.5V681.5H147Q148.5 681.5 148.5 680Q148.5 678.5 147 678.5H144.5M144.5 675.5H146.5Q148 675.5 148 677Q148 678.5 146.5 678.5" fill="none" stroke="#ffff00" stroke-width="1"/><polyline points="147.5,679.5 149,685.5 150.5,681 152,685.5 153.5,679.5" fill="none" stroke="#ffff00" stroke-width="1"/><path d="M283.5 675.5V681.5H286Q287.5 681.5 287.5 680Q287.5 678.5 286 678.5H283.5M283.5 675.5H285.5Q287 675.5 287 677Q287 678.5 285.5 678.5" fill="none" stroke="#00e4e4" stroke-width="1"/><polyline points="286.5,679.5 288,685.5 289.5,681 291,685.5 292.5,679.5" fill="none" stroke="#00e4e4" stroke-width="1"/><path d="M422.5 675.5V681.5H425Q426.5 681.5 426.5 680Q426.5 678.5 425 678.5H422.5M422.5 675.5H424.5Q426 675.5 426 677Q426 678.5 424.5 678.5" fill="none" stroke="#a800b8" stroke-width="1"/><polyline points="425.5,679.5 427,685.5 428.5,681 430,685.5 431.5,679.5" fill="none" stroke="#a800b8" stroke-width="1"/><path d="M560.5 675.5V681.5H563Q564.5 681.5 564.5 680Q564.5 678.5 563 678.5H560.5M560.5 675.5H562.5Q564 675.5 564 677Q564 678.5 562.5 678.5" fill="none" stroke="#20b020" stroke-width="1"/><polyline points="563.5,679.5 565,685.5 566.5,681 568,685.5 569.5,679.5" fill="none" stroke="#20b020" stroke-width="1"/>
</svg>
<div class="t" style="left:0px;top:-2px;font-family:'Liberation Serif';font-weight:bold;font-size:21px;letter-spacing:-1.0px;color:#f2f2ff">Tek</div>
<div class="t" style="left:35px;top:-1px;font-family:'Liberation Sans';font-weight:normal;font-size:16px;letter-spacing:0.5px;color:#f2f2ff">Run</div>
<div class="t" style="left:925px;top:-1px;font-family:'Liberation Sans';font-weight:normal;font-size:16px;letter-spacing:0.75px;color:#fff">Trig?</div>
<div class="t" style="left:3px;top:81px;color:#000;font-size:16px;-webkit-text-stroke:0.6px #000">2</div>
<div class="t" style="left:3px;top:133px;color:#c000c0;font-size:16px;text-rendering:geometricPrecision">3</div>
<div class="t" style="left:3px;top:589px;color:#ffff00;font-size:16px;-webkit-text-stroke:0.6px #ffff00">1</div>
<div class="t" style="left:3px;top:659px;color:#10c010;font-size:16px;-webkit-text-stroke:0.5px #10c010">4</div>
<div class="t" style="left:69px;top:672px;font-family:'Liberation Sans';font-weight:normal;font-size:16px;letter-spacing:0.8px;color:#ffff00">10.0 V</div>
<div class="t" style="left:208px;top:672px;font-family:'Liberation Sans';font-weight:normal;font-size:16px;letter-spacing:1.17px;color:#00e4e4">10.0mVΩ</div>
<div class="t" style="left:345px;top:672px;font-family:'Liberation Sans';font-weight:normal;font-size:16px;letter-spacing:1.5px;color:#a800b8">5.00mVΩ</div>
<div class="t" style="left:485px;top:672px;font-family:'Liberation Sans';font-weight:normal;font-size:16px;letter-spacing:0.8px;color:#20b020">2.00 V</div>
<div class="t" style="left:588px;top:672px;font-family:'Liberation Sans';font-weight:normal;font-size:16px;letter-spacing:1.4px;color:#fff">4.00µs</div>
<div class="t" style="left:623px;top:689px;font-family:'Liberation Sans';font-weight:normal;font-size:16px;letter-spacing:1.0px;color:#ff9c00">15.75200µs</div>
<div class="t" style="left:743px;top:672px;font-family:'Liberation Sans';font-weight:normal;font-size:16px;letter-spacing:0.71px;color:#fff">2.50GS/s</div>
<div class="t" style="left:743px;top:689px;font-family:'Liberation Sans';font-weight:normal;font-size:16px;letter-spacing:1.5px;color:#fff">1M points</div>
<div class="t" style="left:965px;top:672px;font-family:'Liberation Sans';font-weight:normal;font-size:16px;letter-spacing:1.0px;color:#fff">3.40 V</div>
<div class="t" style="left:57px;top:724px;font-family:'Liberation Sans';font-weight:normal;font-size:16px;letter-spacing:1.67px;color:#fff">Type</div>
<div class="t" style="left:59px;top:741px;font-family:'Liberation Sans';font-weight:normal;font-size:16px;letter-spacing:0.0px;color:#fff">Edge</div>
<div class="t" style="left:168px;top:724px;font-family:'Liberation Sans';font-weight:normal;font-size:16px;letter-spacing:0.8px;color:#fff">Source</div>
<div class="t" style="left:276px;top:724px;font-family:'Liberation Sans';font-weight:normal;font-size:16px;letter-spacing:1.71px;color:#fff">Coupling</div>
<div class="t" style="left:303px;top:741px;font-family:'Liberation Sans';font-weight:normal;font-size:16px;letter-spacing:-1.0px;color:#fff">DC</div>
<div class="t" style="left:409px;top:716px;font-family:'Liberation Sans';font-weight:normal;font-size:16px;letter-spacing:1.0px;color:#fff">Slope</div>
<div class="t" style="left:529px;top:724px;font-family:'Liberation Sans';font-weight:normal;font-size:16px;letter-spacing:0.75px;color:#fff">Level</div>
<div class="t" style="left:524px;top:741px;font-family:'Liberation Sans';font-weight:normal;font-size:16px;letter-spacing:0.8px;color:#fff">3.40 V</div>
<div class="t" style="left:764px;top:715px;font-family:'Liberation Sans';font-weight:normal;font-size:16px;letter-spacing:1.0px;color:#fff">Mode</div>
<div class="t" style="left:757px;top:732px;font-family:'Liberation Sans';font-weight:normal;font-size:16px;letter-spacing:1.2px;color:#fff">Normal</div>
<div class="t" style="left:748px;top:749px;font-family:'Liberation Sans';font-weight:normal;font-size:16px;letter-spacing:1.38px;color:#fff">&amp; Holdoff</div>
<div class="t" style="left:915px;top:732px;font-family:'Liberation Sans';font-weight:normal;font-size:16px;letter-spacing:1.7px;color:#fff">11 Apr 2023</div>
<div class="t" style="left:915px;top:748px;font-family:'Liberation Sans';font-weight:normal;font-size:16px;letter-spacing:1.14px;color:#fff">11:41:31</div>
</body></html>
